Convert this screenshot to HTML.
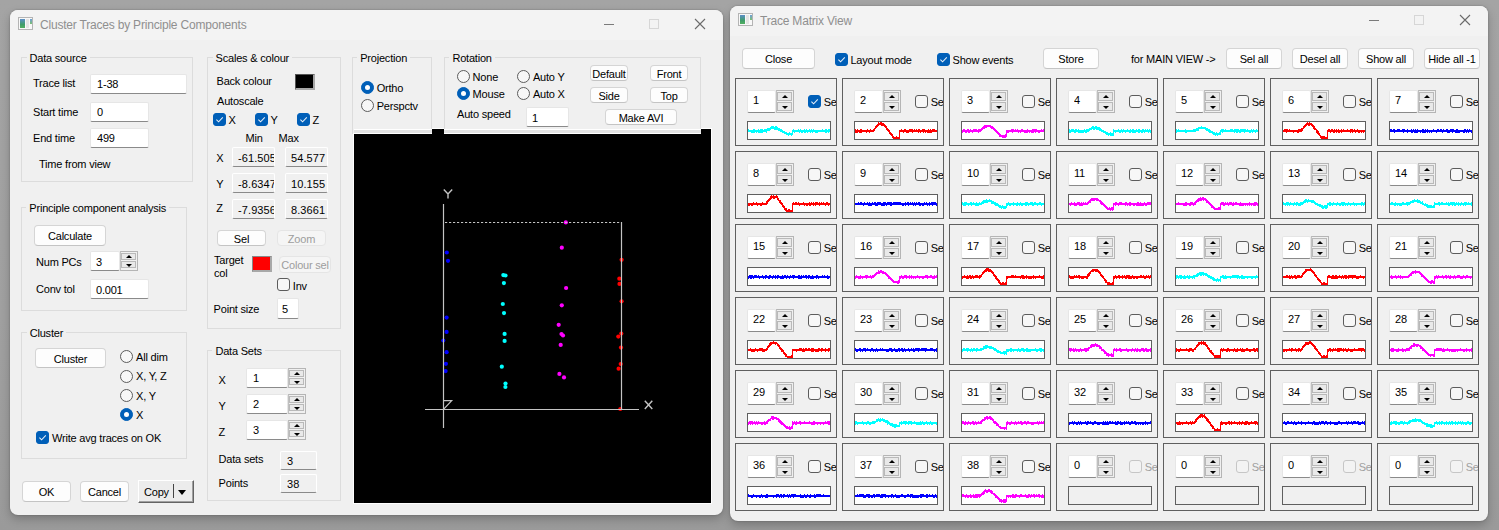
<!DOCTYPE html><html><head><meta charset="utf-8"><style>
*{box-sizing:border-box}
html,body{margin:0;padding:0;width:1499px;height:530px;overflow:hidden;background:#999;}
body{position:relative;font-family:'Liberation Sans', sans-serif;}
.desk{position:absolute;left:0;top:0;width:1499px;height:530px;background:linear-gradient(180deg,#a4a4a4 0%,#a0a0a0 60%,#9a9a9a 100%);}
.win{position:absolute;background:#f0f0f0;border-radius:8px;box-shadow:0 4px 10px rgba(0,0,0,0.22),0 0 2px rgba(0,0,0,0.28);overflow:hidden}
.tbar{position:absolute;left:0;top:0;right:0;height:30px;background:#f3f3f3}
.t{position:absolute;font-size:11px;line-height:13px;white-space:nowrap;color:#000;letter-spacing:-0.2px}
.ttl{position:absolute;font-size:12px;line-height:14px;white-space:nowrap;color:#8f8f8f;letter-spacing:-0.2px}
.grp{position:absolute;border:1px solid #dcdcdc}
.glab{background:#f0f0f0;padding:0 3px}
.btn{position:absolute;background:#fdfdfd;border:1px solid #d5d5d5;border-bottom-color:#c4c4c4;border-radius:4px;text-align:center;font-size:11px;color:#000;white-space:nowrap;overflow:hidden;letter-spacing:-0.2px}
.btn.dis{background:#f5f5f5;border-color:#e5e5e5;color:#9d9d9d}
.ed{position:absolute;background:#fff;border:1px solid #e6e6e6;border-bottom:1px solid #8a8a8a;border-radius:2px}
.ed.ro{background:#f0f0f0;border-color:#fff;border-bottom-color:#8a8a8a}
.spn{position:absolute;background:#f0f0f0;border:1px solid #b5b5b5;border-left-color:#c0c0c0}
.su{position:absolute;left:0px;right:1px;background:#e9e9e9;border:1px solid #b9b9b9}
.au{position:absolute;left:50%;top:50%;margin-left:-3px;margin-top:-2px;width:0;height:0;border-left:3px solid transparent;border-right:3px solid transparent;border-bottom:3px solid #000}
.ad{position:absolute;left:50%;top:50%;margin-left:-3px;margin-top:-1px;width:0;height:0;border-left:3px solid transparent;border-right:3px solid transparent;border-top:3px solid #000}
.cb{position:absolute;width:13px;height:13px;border:1px solid #5c5c5c;border-radius:3px;background:#f7f7f7}
.cb.on{background:#005fb8;border-color:#005fb8}
.cb.dis{border-color:#c6c6c6;background:#f3f3f3}
.rd{position:absolute;width:13px;height:13px;border:1px solid #5c5c5c;border-radius:50%;background:#f7f7f7}
.rd.on{background:#005fb8;border-color:#005fb8}
.rd.on i{position:absolute;left:3px;top:3px;width:5px;height:5px;border-radius:50%;background:#fff}
.cell{position:absolute;width:102px;height:68px;border:1px solid #5f5f5f}
.tr{position:absolute;width:84px;height:19px;border:1px solid #5f5f5f;background:#fff}
.tr.empty{background:#f0f0f0}
</style></head><body><div class="desk"></div>
<div class="win" style="left:10px;top:10px;width:713px;height:505px">
<div class="tbar"></div>
</div>
<div style="position:absolute;left:18px;top:17px;width:15px;height:13px;border:1px solid #b4b4b4;background:#f8f8f8"><div style="position:absolute;left:1px;top:1px;width:5px;height:9px;background:linear-gradient(180deg,#5b8ec8,#3f9c6a 60%,#52b060)"></div><div style="position:absolute;left:7px;top:1px;width:3px;height:9px;background:#e4e4e4"></div><div style="position:absolute;left:11px;top:1px;width:2px;height:5px;background:linear-gradient(180deg,#6f9fd8,#7cc070)"></div></div>
<div class="ttl" style="left:40px;top:18px">Cluster Traces by Principle Components</div>
<div style="position:absolute;left:604px;top:24px;width:10px;height:1px;background:#7a7a7a"></div>
<div style="position:absolute;left:649px;top:19px;width:10px;height:10px;border:1px solid #d6d6d6"></div>
<svg style="position:absolute;left:694px;top:18px" width="12" height="12"><path d="M1 1 L11 11 M11 1 L1 11" stroke="#6a6a6a" stroke-width="1.1"/></svg>
<div class="grp" style="left:21px;top:57px;width:172px;height:125px"></div>
<div class="t glab" style="left:26.5px;top:52px">Data source</div>
<div class="t " style="left:33px;top:77px;">Trace list</div>
<div class="ed" style="left:90px;top:74px;width:97px;height:20px"></div>
<div class="t" style="left:97px;top:78px;width:89px;overflow:hidden;">1-38</div>
<div class="t " style="left:33px;top:106px;">Start time</div>
<div class="ed" style="left:90px;top:102px;width:59px;height:20px"></div>
<div class="t" style="left:97px;top:106px;width:51px;overflow:hidden;">0</div>
<div class="t " style="left:33px;top:132px;">End time</div>
<div class="ed" style="left:90px;top:128px;width:59px;height:20px"></div>
<div class="t" style="left:97px;top:132px;width:51px;overflow:hidden;">499</div>
<div class="t " style="left:39px;top:158px;">Time from view</div>
<div class="grp" style="left:21px;top:207px;width:166px;height:104px"></div>
<div class="t glab" style="left:26.3px;top:202px">Principle component analysis</div>
<div class="btn" style="left:34px;top:225px;width:72px;height:21px;line-height:21px">Calculate</div>
<div class="t " style="left:36px;top:256px;">Num PCs</div>
<div class="ed" style="left:90px;top:251px;width:30px;height:20px"></div>
<div class="t" style="left:96px;top:256px;width:23px;overflow:hidden;">3</div>
<div class="spn" style="left:120px;top:251px;width:18px;height:20px"><div class="su" style="top:1px;height:7px"><i class="au"></i></div><div class="su" style="top:9px;height:7px"><i class="ad"></i></div></div>
<div class="t " style="left:36px;top:283px;">Conv tol</div>
<div class="ed" style="left:90px;top:279px;width:59px;height:20px"></div>
<div class="t" style="left:96px;top:284px;width:52px;overflow:hidden;">0.001</div>
<div class="grp" style="left:21px;top:332px;width:166px;height:127px"></div>
<div class="t glab" style="left:26.7px;top:327px">Cluster</div>
<div class="btn" style="left:35px;top:348px;width:71px;height:20px;line-height:20px">Cluster</div>
<div class="rd" style="left:119.7px;top:350.2px"></div>
<div class="t " style="left:136px;top:351px;">All dim</div>
<div class="rd" style="left:119.7px;top:369.7px"></div>
<div class="t " style="left:136px;top:370px;">X, Y, Z</div>
<div class="rd" style="left:119.7px;top:389.3px"></div>
<div class="t " style="left:136px;top:390px;">X, Y</div>
<div class="rd on" style="left:119.7px;top:408.3px"><i></i></div>
<div class="t " style="left:136px;top:409px;">X</div>
<div class="cb on" style="left:36px;top:431px"><svg width="13" height="13" style="position:absolute;left:0;top:0"><path d="M2.4 5.6 L4.6 7.8 L8.8 3.4" stroke="#e8f0f8" stroke-width="1.05" fill="none"/></svg></div>
<div class="t " style="left:52px;top:432px;">Write avg traces on OK</div>
<div class="btn" style="left:22px;top:481px;width:49px;height:21px;line-height:21px">OK</div>
<div class="btn" style="left:80px;top:481px;width:49px;height:21px;line-height:21px">Cancel</div>
<div style="position:absolute;left:138px;top:480px;width:56px;height:23px;background:#ececec;border-top:1px solid #fff;border-left:1px solid #fff;border-right:1px solid #646464;border-bottom:1px solid #646464;box-shadow:inset -1px -1px 0 #a0a0a0"></div>
<div class="t " style="left:144px;top:486px;">Copy</div>
<div style="position:absolute;left:173px;top:484px;width:1px;height:14px;background:#444"></div>
<div style="position:absolute;left:178px;top:490px;width:0;height:0;border-left:4.5px solid transparent;border-right:4.5px solid transparent;border-top:5px solid #000"></div>
<div class="grp" style="left:207px;top:57px;width:134px;height:272px"></div>
<div class="t glab" style="left:212.6px;top:52px">Scales &amp; colour</div>
<div class="t " style="left:216.5px;top:75px;">Back colour</div>
<div style="position:absolute;left:295px;top:74px;width:20px;height:16px;background:#000;border-right:2px solid #a8a8a8;border-bottom:2px solid #a8a8a8;border-top:1px solid #555;border-left:1px solid #555"></div>
<div class="t " style="left:217px;top:95px;">Autoscale</div>
<div class="cb on" style="left:213px;top:113px"><svg width="13" height="13" style="position:absolute;left:0;top:0"><path d="M2.4 5.6 L4.6 7.8 L8.8 3.4" stroke="#e8f0f8" stroke-width="1.05" fill="none"/></svg></div>
<div class="t " style="left:228.5px;top:114px;">X</div>
<div class="cb on" style="left:255px;top:113px"><svg width="13" height="13" style="position:absolute;left:0;top:0"><path d="M2.4 5.6 L4.6 7.8 L8.8 3.4" stroke="#e8f0f8" stroke-width="1.05" fill="none"/></svg></div>
<div class="t " style="left:270.5px;top:114px;">Y</div>
<div class="cb on" style="left:297px;top:113px"><svg width="13" height="13" style="position:absolute;left:0;top:0"><path d="M2.4 5.6 L4.6 7.8 L8.8 3.4" stroke="#e8f0f8" stroke-width="1.05" fill="none"/></svg></div>
<div class="t " style="left:312.5px;top:114px;">Z</div>
<div class="t " style="left:245.5px;top:132px;">Min</div>
<div class="t " style="left:278.5px;top:132px;">Max</div>
<div class="t " style="left:216.3px;top:152px;">X</div>
<div class="ed ro" style="left:232px;top:147px;width:43px;height:20px"></div>
<div class="t" style="left:238px;top:152px;width:36px;overflow:hidden;letter-spacing:0.1px;">-61.505</div>
<div class="ed ro" style="left:285px;top:147px;width:43px;height:20px"></div>
<div class="t" style="left:291px;top:152px;width:36px;overflow:hidden;letter-spacing:0.1px;">54.577</div>
<div class="t " style="left:216.3px;top:178px;">Y</div>
<div class="ed ro" style="left:232px;top:173px;width:43px;height:20px"></div>
<div class="t" style="left:238px;top:178px;width:36px;overflow:hidden;letter-spacing:0.1px;">-8.6347</div>
<div class="ed ro" style="left:285px;top:173px;width:43px;height:20px"></div>
<div class="t" style="left:291px;top:178px;width:36px;overflow:hidden;letter-spacing:0.1px;">10.155</div>
<div class="t " style="left:216.3px;top:202px;">Z</div>
<div class="ed ro" style="left:232px;top:199px;width:43px;height:20px"></div>
<div class="t" style="left:238px;top:204px;width:36px;overflow:hidden;letter-spacing:0.1px;">-7.9356</div>
<div class="ed ro" style="left:285px;top:199px;width:43px;height:20px"></div>
<div class="t" style="left:291px;top:204px;width:36px;overflow:hidden;letter-spacing:0.1px;">8.3661</div>
<div class="btn" style="left:217px;top:230px;width:49px;height:16px;line-height:16px">Sel</div>
<div class="btn dis" style="left:277px;top:230px;width:49px;height:16px;line-height:16px">Zoom</div>
<div class="t " style="left:214px;top:254px;">Target</div>
<div class="t " style="left:214px;top:267px;">col</div>
<div style="position:absolute;left:252px;top:256px;width:20px;height:16px;background:#ff0000;border-right:2px solid #a8a8a8;border-bottom:2px solid #a8a8a8;border-top:1px solid #888;border-left:1px solid #888"></div>
<div class="btn dis" style="left:279px;top:256px;width:52px;height:17px;line-height:17px">Colour sel</div>
<div class="cb" style="left:277px;top:278px"></div>
<div class="t " style="left:292.8px;top:280px;">Inv</div>
<div class="t " style="left:213.6px;top:303px;">Point size</div>
<div class="ed" style="left:277px;top:298px;width:22px;height:21px"></div>
<div class="t" style="left:282px;top:303px;width:16px;overflow:hidden;">5</div>
<div class="grp" style="left:207px;top:350px;width:134px;height:151px"></div>
<div class="t glab" style="left:212.4px;top:345px">Data Sets</div>
<div class="t " style="left:218.6px;top:374px;">X</div>
<div class="ed" style="left:246px;top:368px;width:42px;height:20px"></div>
<div class="t" style="left:253px;top:372px;width:34px;overflow:hidden;">1</div>
<div class="spn" style="left:288px;top:368px;width:18px;height:20px"><div class="su" style="top:1px;height:7px"><i class="au"></i></div><div class="su" style="top:9px;height:7px"><i class="ad"></i></div></div>
<div class="t " style="left:218.6px;top:400px;">Y</div>
<div class="ed" style="left:246px;top:394px;width:42px;height:20px"></div>
<div class="t" style="left:253px;top:398px;width:34px;overflow:hidden;">2</div>
<div class="spn" style="left:288px;top:394px;width:18px;height:20px"><div class="su" style="top:1px;height:7px"><i class="au"></i></div><div class="su" style="top:9px;height:7px"><i class="ad"></i></div></div>
<div class="t " style="left:218.6px;top:426px;">Z</div>
<div class="ed" style="left:246px;top:420px;width:42px;height:20px"></div>
<div class="t" style="left:253px;top:424px;width:34px;overflow:hidden;">3</div>
<div class="spn" style="left:288px;top:420px;width:18px;height:20px"><div class="su" style="top:1px;height:7px"><i class="au"></i></div><div class="su" style="top:9px;height:7px"><i class="ad"></i></div></div>
<div class="t " style="left:218.6px;top:453px;">Data sets</div>
<div class="ed ro" style="left:280px;top:451px;width:37px;height:19px"></div>
<div class="t" style="left:287px;top:455px;width:29px;overflow:hidden;letter-spacing:0.1px;">3</div>
<div class="t " style="left:218.6px;top:477px;">Points</div>
<div class="ed ro" style="left:280px;top:474px;width:37px;height:19px"></div>
<div class="t" style="left:287px;top:478px;width:29px;overflow:hidden;letter-spacing:0.1px;">38</div>
<div class="grp" style="left:352px;top:57px;width:80px;height:77px"></div>
<div class="t glab" style="left:357.2px;top:52px">Projection</div>
<div class="rd on" style="left:360.9px;top:81.0px"><i></i></div>
<div class="t " style="left:376.7px;top:82px;">Ortho</div>
<div class="rd" style="left:360.9px;top:99.2px"></div>
<div class="t " style="left:376.7px;top:100px;">Perspctv</div>
<div class="grp" style="left:444px;top:57px;width:257px;height:77px"></div>
<div class="t glab" style="left:449.4px;top:52px">Rotation</div>
<div class="rd" style="left:456.9px;top:70.1px"></div>
<div class="t " style="left:472.6px;top:71px;">None</div>
<div class="rd on" style="left:456.9px;top:87.1px"><i></i></div>
<div class="t " style="left:472.6px;top:88px;">Mouse</div>
<div class="rd" style="left:516.9px;top:70.1px"></div>
<div class="t " style="left:532.9px;top:71px;">Auto Y</div>
<div class="rd" style="left:516.9px;top:87.1px"></div>
<div class="t " style="left:532.9px;top:88px;">Auto X</div>
<div class="t " style="left:457px;top:108px;">Auto speed</div>
<div class="ed" style="left:526px;top:107px;width:43px;height:20px"></div>
<div class="t" style="left:532px;top:112px;width:36px;overflow:hidden;">1</div>
<div class="btn" style="left:590px;top:65px;width:38px;height:16px;line-height:16px">Default</div>
<div class="btn" style="left:650px;top:65px;width:38px;height:16px;line-height:16px">Front</div>
<div class="btn" style="left:590px;top:87px;width:38px;height:16px;line-height:16px">Side</div>
<div class="btn" style="left:650px;top:87px;width:38px;height:16px;line-height:16px">Top</div>
<div class="btn" style="left:605px;top:109px;width:72px;height:16px;line-height:16px">Make AVI</div>
<div style="position:absolute;left:353px;top:128px;width:359px;height:376px;background:#fff"></div>
<div style="position:absolute;left:354px;top:129px;width:357px;height:374px;background:#000"></div>
<div style="position:absolute;left:353px;top:128px;width:79px;height:6px;background:linear-gradient(180deg,#f0f0f0 0px,#f0f0f0 1px,#fff 1px,#fff 2px,#e3e3e3 2px,#e3e3e3 5px,#fff 5px,#fff 6px)"></div>
<div style="position:absolute;left:353px;top:128px;width:1px;height:5px;background:#f0f0f0"></div>
<div style="position:absolute;left:444px;top:128px;width:257px;height:6px;background:linear-gradient(180deg,#f0f0f0 0px,#f0f0f0 1px,#fff 1px,#fff 2px,#e3e3e3 2px,#e3e3e3 5px,#fff 5px,#fff 6px)"></div>
<div style="position:absolute;left:352px;top:57px;width:1px;height:76px;background:#dcdcdc"></div>
<div style="position:absolute;left:431px;top:57px;width:1px;height:72px;background:#dcdcdc"></div>
<div style="position:absolute;left:444px;top:57px;width:1px;height:72px;background:#dcdcdc"></div>
<div style="position:absolute;left:700px;top:57px;width:1px;height:72px;background:#dcdcdc"></div>
<svg style="position:absolute;left:0;top:0" width="1499" height="530"><circle cx="446.8" cy="252.5" r="2.1" fill="#0000ff"/><circle cx="448" cy="260.8" r="2.1" fill="#0000ff"/><circle cx="446.6" cy="317.6" r="2.1" fill="#0000ff"/><circle cx="446.6" cy="331.9" r="2.1" fill="#0000ff"/><circle cx="443.3" cy="340.5" r="2.1" fill="#0000ff"/><circle cx="446.6" cy="352.2" r="2.1" fill="#0000ff"/><circle cx="445.9" cy="363.8" r="2.1" fill="#0000ff"/><circle cx="445.6" cy="371.1" r="2.1" fill="#0000ff"/><circle cx="503.3" cy="275.1" r="2.1" fill="#00ffff"/><circle cx="505.5" cy="275.5" r="2.1" fill="#00ffff"/><circle cx="503.9" cy="283.1" r="2.1" fill="#00ffff"/><circle cx="502.8" cy="304" r="2.1" fill="#00ffff"/><circle cx="504" cy="313.1" r="2.1" fill="#00ffff"/><circle cx="504.6" cy="333.9" r="2.1" fill="#00ffff"/><circle cx="504.6" cy="340.9" r="2.1" fill="#00ffff"/><circle cx="501.8" cy="366.7" r="2.1" fill="#00ffff"/><circle cx="505.5" cy="383.5" r="2.1" fill="#00ffff"/><circle cx="505.4" cy="387" r="2.1" fill="#00ffff"/><circle cx="565.8" cy="222.4" r="2.1" fill="#ff00ff"/><circle cx="561.8" cy="247.7" r="2.1" fill="#ff00ff"/><circle cx="566.1" cy="288" r="2.1" fill="#ff00ff"/><circle cx="561.8" cy="305.3" r="2.1" fill="#ff00ff"/><circle cx="558.7" cy="324.8" r="2.1" fill="#ff00ff"/><circle cx="561.5" cy="334" r="2.1" fill="#ff00ff"/><circle cx="563" cy="335.5" r="2.1" fill="#ff00ff"/><circle cx="560.7" cy="344.9" r="2.1" fill="#ff00ff"/><circle cx="559.4" cy="373.9" r="2.1" fill="#ff00ff"/><circle cx="564" cy="377.4" r="2.1" fill="#ff00ff"/><circle cx="621.6" cy="259.8" r="2.1" fill="#ff0000"/><circle cx="619.3" cy="278.7" r="2.1" fill="#ff0000"/><circle cx="619.5" cy="283.9" r="2.1" fill="#ff0000"/><circle cx="621.6" cy="301.3" r="2.1" fill="#ff0000"/><circle cx="621.3" cy="333.6" r="2.1" fill="#ff0000"/><circle cx="618.3" cy="336.6" r="2.1" fill="#ff0000"/><circle cx="621" cy="347.6" r="2.1" fill="#ff0000"/><circle cx="620.7" cy="364" r="2.1" fill="#ff0000"/><circle cx="618.6" cy="368.7" r="2.1" fill="#ff0000"/><circle cx="620.3" cy="409" r="2.1" fill="#ff0000"/><line x1="443.5" y1="204" x2="443.5" y2="428" stroke="#c4c4c4" stroke-width="1.2"/><line x1="425" y1="409.5" x2="639" y2="409.5" stroke="#c4c4c4" stroke-width="1.2"/><line x1="621.5" y1="222" x2="621.5" y2="409" stroke="#c4c4c4" stroke-width="1.2"/><line x1="445" y1="222.5" x2="621" y2="222.5" stroke="#c4c4c4" stroke-width="1.2" stroke-dasharray="2.2,1.8"/><path d="M443.8 189.5 L448 194 L452.2 189.5 M448 194 L448 198.5" stroke="#c4c4c4" stroke-width="1.4" fill="none"/><path d="M644.8 400.8 L652.3 409 M652.3 400.8 L644.8 409" stroke="#c4c4c4" stroke-width="1.4" fill="none"/><path d="M443.5 400.6 L451.7 400.6 L443.5 409.4" stroke="#c4c4c4" stroke-width="1.2" fill="none"/></svg>
<div class="win" style="left:730px;top:6px;width:758px;height:515px">
<div class="tbar"></div>
</div>
<div style="position:absolute;left:738px;top:13px;width:15px;height:13px;border:1px solid #b4b4b4;background:#f8f8f8"><div style="position:absolute;left:1px;top:1px;width:5px;height:9px;background:linear-gradient(180deg,#5b8ec8,#3f9c6a 60%,#52b060)"></div><div style="position:absolute;left:7px;top:1px;width:3px;height:9px;background:#e4e4e4"></div><div style="position:absolute;left:11px;top:1px;width:2px;height:5px;background:linear-gradient(180deg,#6f9fd8,#7cc070)"></div></div>
<div class="ttl" style="left:760px;top:14px">Trace Matrix View</div>
<div style="position:absolute;left:1369px;top:20px;width:10px;height:1px;background:#7a7a7a"></div>
<div style="position:absolute;left:1414px;top:15px;width:10px;height:10px;border:1px solid #d6d6d6"></div>
<svg style="position:absolute;left:1459px;top:14px" width="12" height="12"><path d="M1 1 L11 11 M11 1 L1 11" stroke="#6a6a6a" stroke-width="1.1"/></svg>
<div class="btn" style="left:742px;top:48px;width:73px;height:21px;line-height:21px">Close</div>
<div class="cb on" style="left:835px;top:53px"><svg width="13" height="13" style="position:absolute;left:0;top:0"><path d="M2.4 5.6 L4.6 7.8 L8.8 3.4" stroke="#e8f0f8" stroke-width="1.05" fill="none"/></svg></div>
<div class="t " style="left:850.4px;top:54px;">Layout mode</div>
<div class="cb on" style="left:937px;top:53px"><svg width="13" height="13" style="position:absolute;left:0;top:0"><path d="M2.4 5.6 L4.6 7.8 L8.8 3.4" stroke="#e8f0f8" stroke-width="1.05" fill="none"/></svg></div>
<div class="t " style="left:952.5px;top:54px;">Show events</div>
<div class="btn" style="left:1043px;top:48px;width:56px;height:21px;line-height:21px">Store</div>
<div class="t " style="left:1131px;top:53px;">for MAIN VIEW -&gt;</div>
<div class="btn" style="left:1226px;top:48px;width:56px;height:21px;line-height:21px">Sel all</div>
<div class="btn" style="left:1292px;top:48px;width:56px;height:21px;line-height:21px">Desel all</div>
<div class="btn" style="left:1358px;top:48px;width:56px;height:21px;line-height:21px">Show all</div>
<div class="btn" style="left:1424px;top:48px;width:56px;height:21px;line-height:21px">Hide all -1</div>
<div class="cell" style="left:735px;top:78px"></div>
<div class="ed" style="left:747px;top:90px;width:29px;height:23px"></div>
<div class="t" style="left:753px;top:94px;width:22px;overflow:hidden;">1</div>
<div class="spn" style="left:776px;top:90px;width:18px;height:23px"><div class="su" style="top:1px;height:9px"><i class="au"></i></div><div class="su" style="top:11px;height:9px"><i class="ad"></i></div></div>
<div class="cb on" style="left:808px;top:95px"><svg width="13" height="13" style="position:absolute;left:0;top:0"><path d="M2.4 5.6 L4.6 7.8 L8.8 3.4" stroke="#e8f0f8" stroke-width="1.05" fill="none"/></svg></div>
<div class="t" style="left:823.7px;top:96px;width:12px;overflow:hidden">Sel</div>
<div class="tr" style="left:747px;top:121px"><svg width="82" height="17" style="position:absolute;left:0;top:0"><path d="M0 7h1v3h-1zM1 8h1v2h-1zM2 8h1v2h-1zM3 8h1v3h-1zM4 8h1v3h-1zM5 7h1v4h-1zM6 7h1v4h-1zM7 8h1v2h-1zM8 8h1v3h-1zM9 8h1v2h-1zM10 7h1v4h-1zM11 8h1v3h-1zM12 7h1v4h-1zM13 7h1v4h-1zM14 7h1v4h-1zM15 8h1v2h-1zM16 7h1v3h-1zM17 7h1v3h-1zM18 7h1v4h-1zM19 6h1v3h-1zM20 6h1v3h-1zM21 6h1v3h-1zM22 5h1v3h-1zM23 4h1v3h-1zM24 4h1v3h-1zM25 4h1v3h-1zM26 5h1v3h-1zM27 4h1v4h-1zM28 4h1v4h-1zM29 5h1v3h-1zM30 6h1v3h-1zM31 6h1v3h-1zM32 7h1v3h-1zM33 7h1v3h-1zM34 8h1v3h-1zM35 9h1v2h-1zM36 9h1v3h-1zM37 10h1v2h-1zM38 10h1v3h-1zM39 11h1v2h-1zM40 11h1v3h-1zM41 10h1v3h-1zM42 11h1v2h-1zM43 11h1v3h-1zM44 8h1v5h-1zM45 7h1v3h-1zM46 8h1v3h-1zM47 8h1v2h-1zM48 8h1v2h-1zM49 8h1v2h-1zM50 7h1v3h-1zM51 8h1v3h-1zM52 7h1v3h-1zM53 8h1v3h-1zM54 8h1v3h-1zM55 8h1v2h-1zM56 7h1v4h-1zM57 8h1v3h-1zM58 7h1v3h-1zM59 8h1v3h-1zM60 8h1v2h-1zM61 7h1v3h-1zM62 8h1v3h-1zM63 7h1v3h-1zM64 8h1v3h-1zM65 7h1v3h-1zM66 8h1v2h-1zM67 8h1v3h-1zM68 8h1v3h-1zM69 8h1v3h-1zM70 8h1v2h-1zM71 8h1v2h-1zM72 8h1v2h-1zM73 8h1v2h-1zM74 7h1v3h-1zM75 8h1v2h-1zM76 8h1v2h-1zM77 7h1v4h-1zM78 7h1v4h-1zM79 8h1v2h-1zM80 7h1v4h-1zM81 7h1v3h-1z" fill="#00ffff" shape-rendering="crispEdges"/></svg></div>
<div class="cell" style="left:842px;top:78px"></div>
<div class="ed" style="left:854px;top:90px;width:29px;height:23px"></div>
<div class="t" style="left:860px;top:94px;width:22px;overflow:hidden;">2</div>
<div class="spn" style="left:883px;top:90px;width:18px;height:23px"><div class="su" style="top:1px;height:9px"><i class="au"></i></div><div class="su" style="top:11px;height:9px"><i class="ad"></i></div></div>
<div class="cb" style="left:915px;top:95px"></div>
<div class="t" style="left:930.7px;top:96px;width:12px;overflow:hidden">Sel</div>
<div class="tr" style="left:854px;top:121px"><svg width="82" height="17" style="position:absolute;left:0;top:0"><path d="M0 7h1v4h-1zM1 8h1v3h-1zM2 7h1v4h-1zM3 8h1v2h-1zM4 8h1v3h-1zM5 7h1v4h-1zM6 7h1v4h-1zM7 8h1v2h-1zM8 8h1v2h-1zM9 8h1v2h-1zM10 8h1v2h-1zM11 8h1v3h-1zM12 7h1v3h-1zM13 8h1v2h-1zM14 8h1v3h-1zM15 7h1v3h-1zM16 8h1v2h-1zM17 8h1v2h-1zM18 7h1v3h-1zM19 6h1v3h-1zM20 4h1v3h-1zM21 3h1v3h-1zM22 2h1v3h-1zM23 0h1v4h-1zM24 1h1v2h-1zM25 0h1v3h-1zM26 0h1v4h-1zM27 1h1v3h-1zM28 1h1v3h-1zM29 2h1v3h-1zM30 3h1v3h-1zM31 4h1v4h-1zM32 6h1v3h-1zM33 7h1v3h-1zM34 8h1v4h-1zM35 10h1v3h-1zM36 11h1v3h-1zM37 12h1v4h-1zM38 14h1v3h-1zM39 15h1v2h-1zM40 15h1v2h-1zM41 14h1v3h-1zM42 15h1v2h-1zM43 15h1v2h-1zM44 8h1v9h-1zM45 8h1v2h-1zM46 7h1v3h-1zM47 8h1v2h-1zM48 8h1v3h-1zM49 7h1v3h-1zM50 7h1v3h-1zM51 8h1v3h-1zM52 8h1v3h-1zM53 8h1v3h-1zM54 7h1v3h-1zM55 7h1v3h-1zM56 7h1v3h-1zM57 7h1v4h-1zM58 8h1v2h-1zM59 7h1v3h-1zM60 8h1v2h-1zM61 7h1v3h-1zM62 8h1v2h-1zM63 7h1v4h-1zM64 7h1v3h-1zM65 8h1v3h-1zM66 8h1v2h-1zM67 7h1v3h-1zM68 7h1v4h-1zM69 7h1v3h-1zM70 8h1v3h-1zM71 8h1v2h-1zM72 8h1v3h-1zM73 7h1v4h-1zM74 8h1v3h-1zM75 7h1v4h-1zM76 8h1v3h-1zM77 7h1v3h-1zM78 7h1v3h-1zM79 7h1v3h-1zM80 8h1v2h-1zM81 8h1v2h-1z" fill="#ff0000" shape-rendering="crispEdges"/></svg></div>
<div class="cell" style="left:949px;top:78px"></div>
<div class="ed" style="left:961px;top:90px;width:29px;height:23px"></div>
<div class="t" style="left:967px;top:94px;width:22px;overflow:hidden;">3</div>
<div class="spn" style="left:990px;top:90px;width:18px;height:23px"><div class="su" style="top:1px;height:9px"><i class="au"></i></div><div class="su" style="top:11px;height:9px"><i class="ad"></i></div></div>
<div class="cb" style="left:1022px;top:95px"></div>
<div class="t" style="left:1037.7px;top:96px;width:12px;overflow:hidden">Sel</div>
<div class="tr" style="left:961px;top:121px"><svg width="82" height="17" style="position:absolute;left:0;top:0"><path d="M0 8h1v3h-1zM1 7h1v3h-1zM2 7h1v3h-1zM3 8h1v3h-1zM4 8h1v3h-1zM5 7h1v3h-1zM6 7h1v4h-1zM7 8h1v3h-1zM8 7h1v3h-1zM9 8h1v2h-1zM10 8h1v3h-1zM11 7h1v3h-1zM12 7h1v3h-1zM13 7h1v3h-1zM14 7h1v3h-1zM15 8h1v2h-1zM16 7h1v4h-1zM17 7h1v3h-1zM18 7h1v3h-1zM19 6h1v3h-1zM20 5h1v3h-1zM21 4h1v3h-1zM22 3h1v4h-1zM23 3h1v3h-1zM24 3h1v3h-1zM25 3h1v2h-1zM26 3h1v2h-1zM27 3h1v2h-1zM28 3h1v3h-1zM29 4h1v3h-1zM30 4h1v3h-1zM31 5h1v3h-1zM32 6h1v3h-1zM33 7h1v3h-1zM34 8h1v3h-1zM35 9h1v3h-1zM36 10h1v3h-1zM37 11h1v4h-1zM38 12h1v3h-1zM39 13h1v2h-1zM40 13h1v3h-1zM41 13h1v3h-1zM42 13h1v3h-1zM43 12h1v4h-1zM44 8h1v7h-1zM45 8h1v3h-1zM46 8h1v3h-1zM47 8h1v2h-1zM48 8h1v2h-1zM49 7h1v3h-1zM50 7h1v4h-1zM51 7h1v3h-1zM52 8h1v2h-1zM53 7h1v3h-1zM54 8h1v2h-1zM55 7h1v3h-1zM56 8h1v3h-1zM57 8h1v2h-1zM58 8h1v3h-1zM59 7h1v3h-1zM60 7h1v3h-1zM61 8h1v2h-1zM62 8h1v3h-1zM63 8h1v3h-1zM64 8h1v3h-1zM65 7h1v4h-1zM66 8h1v2h-1zM67 8h1v3h-1zM68 8h1v2h-1zM69 8h1v3h-1zM70 7h1v4h-1zM71 7h1v4h-1zM72 7h1v3h-1zM73 7h1v4h-1zM74 7h1v3h-1zM75 8h1v2h-1zM76 8h1v3h-1zM77 8h1v3h-1zM78 8h1v2h-1zM79 7h1v3h-1zM80 8h1v2h-1zM81 7h1v3h-1z" fill="#ff00ff" shape-rendering="crispEdges"/></svg></div>
<div class="cell" style="left:1056px;top:78px"></div>
<div class="ed" style="left:1068px;top:90px;width:29px;height:23px"></div>
<div class="t" style="left:1074px;top:94px;width:22px;overflow:hidden;">4</div>
<div class="spn" style="left:1097px;top:90px;width:18px;height:23px"><div class="su" style="top:1px;height:9px"><i class="au"></i></div><div class="su" style="top:11px;height:9px"><i class="ad"></i></div></div>
<div class="cb" style="left:1129px;top:95px"></div>
<div class="t" style="left:1144.7px;top:96px;width:12px;overflow:hidden">Sel</div>
<div class="tr" style="left:1068px;top:121px"><svg width="82" height="17" style="position:absolute;left:0;top:0"><path d="M0 7h1v4h-1zM1 8h1v3h-1zM2 7h1v3h-1zM3 7h1v3h-1zM4 7h1v3h-1zM5 8h1v3h-1zM6 7h1v4h-1zM7 7h1v3h-1zM8 8h1v2h-1zM9 7h1v4h-1zM10 8h1v3h-1zM11 8h1v3h-1zM12 8h1v3h-1zM13 8h1v3h-1zM14 8h1v3h-1zM15 7h1v3h-1zM16 8h1v3h-1zM17 7h1v4h-1zM18 7h1v3h-1zM19 7h1v3h-1zM20 6h1v3h-1zM21 6h1v2h-1zM22 5h1v3h-1zM23 4h1v3h-1zM24 4h1v4h-1zM25 5h1v3h-1zM26 4h1v3h-1zM27 4h1v4h-1zM28 5h1v3h-1zM29 5h1v3h-1zM30 5h1v4h-1zM31 6h1v3h-1zM32 7h1v3h-1zM33 8h1v2h-1zM34 8h1v3h-1zM35 9h1v2h-1zM36 9h1v3h-1zM37 10h1v3h-1zM38 10h1v3h-1zM39 11h1v3h-1zM40 11h1v2h-1zM41 10h1v4h-1zM42 11h1v3h-1zM43 11h1v3h-1zM44 7h1v7h-1zM45 8h1v2h-1zM46 8h1v3h-1zM47 8h1v2h-1zM48 8h1v2h-1zM49 7h1v3h-1zM50 8h1v3h-1zM51 8h1v3h-1zM52 7h1v3h-1zM53 8h1v3h-1zM54 7h1v3h-1zM55 8h1v2h-1zM56 8h1v3h-1zM57 8h1v2h-1zM58 7h1v3h-1zM59 8h1v2h-1zM60 8h1v3h-1zM61 7h1v4h-1zM62 8h1v2h-1zM63 7h1v4h-1zM64 7h1v4h-1zM65 8h1v3h-1zM66 8h1v3h-1zM67 7h1v3h-1zM68 8h1v2h-1zM69 7h1v4h-1zM70 7h1v4h-1zM71 8h1v2h-1zM72 8h1v3h-1zM73 7h1v4h-1zM74 7h1v3h-1zM75 8h1v3h-1zM76 7h1v3h-1zM77 8h1v2h-1zM78 7h1v3h-1zM79 8h1v3h-1zM80 7h1v3h-1zM81 8h1v3h-1z" fill="#00ffff" shape-rendering="crispEdges"/></svg></div>
<div class="cell" style="left:1163px;top:78px"></div>
<div class="ed" style="left:1175px;top:90px;width:29px;height:23px"></div>
<div class="t" style="left:1181px;top:94px;width:22px;overflow:hidden;">5</div>
<div class="spn" style="left:1204px;top:90px;width:18px;height:23px"><div class="su" style="top:1px;height:9px"><i class="au"></i></div><div class="su" style="top:11px;height:9px"><i class="ad"></i></div></div>
<div class="cb" style="left:1236px;top:95px"></div>
<div class="t" style="left:1251.7px;top:96px;width:12px;overflow:hidden">Sel</div>
<div class="tr" style="left:1175px;top:121px"><svg width="82" height="17" style="position:absolute;left:0;top:0"><path d="M0 7h1v4h-1zM1 8h1v2h-1zM2 7h1v3h-1zM3 8h1v2h-1zM4 8h1v2h-1zM5 8h1v2h-1zM6 8h1v2h-1zM7 8h1v2h-1zM8 8h1v2h-1zM9 7h1v4h-1zM10 8h1v3h-1zM11 8h1v2h-1zM12 8h1v2h-1zM13 8h1v2h-1zM14 8h1v2h-1zM15 8h1v2h-1zM16 8h1v2h-1zM17 7h1v3h-1zM18 7h1v3h-1zM19 7h1v3h-1zM20 6h1v3h-1zM21 6h1v3h-1zM22 5h1v4h-1zM23 5h1v2h-1zM24 5h1v2h-1zM25 4h1v3h-1zM26 5h1v2h-1zM27 5h1v2h-1zM28 5h1v2h-1zM29 5h1v3h-1zM30 6h1v3h-1zM31 6h1v3h-1zM32 7h1v3h-1zM33 7h1v4h-1zM34 8h1v3h-1zM35 9h1v2h-1zM36 9h1v3h-1zM37 10h1v3h-1zM38 10h1v3h-1zM39 11h1v3h-1zM40 10h1v3h-1zM41 11h1v3h-1zM42 11h1v2h-1zM43 10h1v3h-1zM44 8h1v5h-1zM45 7h1v3h-1zM46 7h1v4h-1zM47 7h1v3h-1zM48 8h1v2h-1zM49 7h1v3h-1zM50 8h1v2h-1zM51 8h1v2h-1zM52 8h1v2h-1zM53 8h1v2h-1zM54 7h1v3h-1zM55 7h1v3h-1zM56 7h1v3h-1zM57 8h1v2h-1zM58 7h1v4h-1zM59 7h1v3h-1zM60 7h1v4h-1zM61 7h1v4h-1zM62 7h1v3h-1zM63 8h1v3h-1zM64 7h1v4h-1zM65 7h1v3h-1zM66 7h1v3h-1zM67 7h1v3h-1zM68 7h1v4h-1zM69 7h1v3h-1zM70 8h1v2h-1zM71 7h1v3h-1zM72 8h1v2h-1zM73 8h1v3h-1zM74 8h1v3h-1zM75 7h1v3h-1zM76 8h1v3h-1zM77 7h1v3h-1zM78 8h1v2h-1zM79 8h1v3h-1zM80 7h1v3h-1zM81 8h1v2h-1z" fill="#00ffff" shape-rendering="crispEdges"/></svg></div>
<div class="cell" style="left:1270px;top:78px"></div>
<div class="ed" style="left:1282px;top:90px;width:29px;height:23px"></div>
<div class="t" style="left:1288px;top:94px;width:22px;overflow:hidden;">6</div>
<div class="spn" style="left:1311px;top:90px;width:18px;height:23px"><div class="su" style="top:1px;height:9px"><i class="au"></i></div><div class="su" style="top:11px;height:9px"><i class="ad"></i></div></div>
<div class="cb" style="left:1343px;top:95px"></div>
<div class="t" style="left:1358.7px;top:96px;width:12px;overflow:hidden">Sel</div>
<div class="tr" style="left:1282px;top:121px"><svg width="82" height="17" style="position:absolute;left:0;top:0"><path d="M0 8h1v2h-1zM1 7h1v3h-1zM2 7h1v3h-1zM3 7h1v4h-1zM4 7h1v3h-1zM5 8h1v2h-1zM6 7h1v3h-1zM7 8h1v2h-1zM8 8h1v2h-1zM9 8h1v2h-1zM10 8h1v3h-1zM11 8h1v2h-1zM12 8h1v2h-1zM13 8h1v2h-1zM14 8h1v3h-1zM15 7h1v4h-1zM16 7h1v3h-1zM17 7h1v3h-1zM18 6h1v4h-1zM19 6h1v3h-1zM20 4h1v3h-1zM21 3h1v3h-1zM22 2h1v3h-1zM23 1h1v3h-1zM24 0h1v3h-1zM25 1h1v3h-1zM26 0h1v4h-1zM27 1h1v2h-1zM28 1h1v3h-1zM29 2h1v3h-1zM30 3h1v4h-1zM31 4h1v4h-1zM32 6h1v2h-1zM33 7h1v4h-1zM34 8h1v4h-1zM35 9h1v4h-1zM36 11h1v3h-1zM37 13h1v3h-1zM38 14h1v3h-1zM39 14h1v3h-1zM40 14h1v3h-1zM41 14h1v3h-1zM42 15h1v2h-1zM43 15h1v2h-1zM44 8h1v9h-1zM45 7h1v3h-1zM46 7h1v3h-1zM47 8h1v3h-1zM48 7h1v3h-1zM49 7h1v3h-1zM50 8h1v3h-1zM51 7h1v4h-1zM52 8h1v2h-1zM53 7h1v4h-1zM54 8h1v2h-1zM55 7h1v4h-1zM56 8h1v3h-1zM57 8h1v2h-1zM58 7h1v4h-1zM59 8h1v2h-1zM60 7h1v3h-1zM61 8h1v2h-1zM62 8h1v2h-1zM63 8h1v2h-1zM64 7h1v3h-1zM65 8h1v2h-1zM66 8h1v2h-1zM67 7h1v4h-1zM68 7h1v3h-1zM69 7h1v4h-1zM70 8h1v2h-1zM71 7h1v3h-1zM72 8h1v3h-1zM73 8h1v2h-1zM74 7h1v3h-1zM75 8h1v3h-1zM76 8h1v3h-1zM77 8h1v2h-1zM78 8h1v3h-1zM79 8h1v2h-1zM80 8h1v3h-1zM81 8h1v2h-1z" fill="#ff0000" shape-rendering="crispEdges"/></svg></div>
<div class="cell" style="left:1377px;top:78px"></div>
<div class="ed" style="left:1389px;top:90px;width:29px;height:23px"></div>
<div class="t" style="left:1395px;top:94px;width:22px;overflow:hidden;">7</div>
<div class="spn" style="left:1418px;top:90px;width:18px;height:23px"><div class="su" style="top:1px;height:9px"><i class="au"></i></div><div class="su" style="top:11px;height:9px"><i class="ad"></i></div></div>
<div class="cb" style="left:1450px;top:95px"></div>
<div class="t" style="left:1465.7px;top:96px;width:12px;overflow:hidden">Sel</div>
<div class="tr" style="left:1389px;top:121px"><svg width="82" height="17" style="position:absolute;left:0;top:0"><path d="M0 7h1v3h-1zM1 7h1v3h-1zM2 8h1v2h-1zM3 7h1v3h-1zM4 7h1v4h-1zM5 8h1v2h-1zM6 8h1v2h-1zM7 7h1v3h-1zM8 7h1v3h-1zM9 7h1v3h-1zM10 8h1v2h-1zM11 8h1v2h-1zM12 7h1v3h-1zM13 7h1v4h-1zM14 7h1v3h-1zM15 8h1v2h-1zM16 8h1v2h-1zM17 7h1v4h-1zM18 8h1v2h-1zM19 8h1v2h-1zM20 8h1v2h-1zM21 7h1v4h-1zM22 8h1v3h-1zM23 7h1v3h-1zM24 8h1v3h-1zM25 7h1v4h-1zM26 8h1v3h-1zM27 7h1v4h-1zM28 8h1v2h-1zM29 8h1v2h-1zM30 8h1v3h-1zM31 8h1v2h-1zM32 7h1v4h-1zM33 7h1v4h-1zM34 8h1v3h-1zM35 7h1v4h-1zM36 8h1v2h-1zM37 7h1v4h-1zM38 8h1v2h-1zM39 8h1v3h-1zM40 8h1v2h-1zM41 8h1v3h-1zM42 8h1v2h-1zM43 7h1v3h-1zM44 8h1v2h-1zM45 8h1v2h-1zM46 8h1v3h-1zM47 7h1v3h-1zM48 7h1v3h-1zM49 8h1v2h-1zM50 7h1v3h-1zM51 7h1v3h-1zM52 8h1v3h-1zM53 7h1v3h-1zM54 8h1v2h-1zM55 8h1v2h-1zM56 7h1v3h-1zM57 7h1v4h-1zM58 8h1v3h-1zM59 8h1v3h-1zM60 7h1v3h-1zM61 7h1v3h-1zM62 7h1v4h-1zM63 7h1v3h-1zM64 8h1v2h-1zM65 8h1v3h-1zM66 7h1v4h-1zM67 7h1v4h-1zM68 8h1v3h-1zM69 8h1v3h-1zM70 8h1v2h-1zM71 8h1v2h-1zM72 8h1v2h-1zM73 8h1v3h-1zM74 7h1v4h-1zM75 7h1v3h-1zM76 8h1v3h-1zM77 7h1v3h-1zM78 8h1v3h-1zM79 7h1v3h-1zM80 8h1v2h-1zM81 8h1v3h-1z" fill="#0000ff" shape-rendering="crispEdges"/></svg></div>
<div class="cell" style="left:735px;top:151px"></div>
<div class="ed" style="left:747px;top:163px;width:29px;height:23px"></div>
<div class="t" style="left:753px;top:167px;width:22px;overflow:hidden;">8</div>
<div class="spn" style="left:776px;top:163px;width:18px;height:23px"><div class="su" style="top:1px;height:9px"><i class="au"></i></div><div class="su" style="top:11px;height:9px"><i class="ad"></i></div></div>
<div class="cb" style="left:808px;top:168px"></div>
<div class="t" style="left:823.7px;top:169px;width:12px;overflow:hidden">Sel</div>
<div class="tr" style="left:747px;top:194px"><svg width="82" height="17" style="position:absolute;left:0;top:0"><path d="M0 8h1v3h-1zM1 8h1v3h-1zM2 8h1v2h-1zM3 8h1v3h-1zM4 8h1v3h-1zM5 7h1v3h-1zM6 8h1v2h-1zM7 8h1v2h-1zM8 7h1v3h-1zM9 8h1v3h-1zM10 8h1v2h-1zM11 8h1v2h-1zM12 8h1v3h-1zM13 8h1v3h-1zM14 7h1v3h-1zM15 8h1v2h-1zM16 8h1v2h-1zM17 8h1v2h-1zM18 6h1v4h-1zM19 5h1v4h-1zM20 4h1v3h-1zM21 3h1v3h-1zM22 1h1v4h-1zM23 0h1v4h-1zM24 1h1v2h-1zM25 0h1v4h-1zM26 1h1v3h-1zM27 1h1v2h-1zM28 0h1v3h-1zM29 1h1v4h-1zM30 3h1v3h-1zM31 5h1v3h-1zM32 5h1v4h-1zM33 7h1v3h-1zM34 8h1v4h-1zM35 10h1v3h-1zM36 11h1v4h-1zM37 13h1v3h-1zM38 13h1v4h-1zM39 15h1v2h-1zM40 14h1v3h-1zM41 14h1v3h-1zM42 15h1v2h-1zM43 15h1v2h-1zM44 8h1v9h-1zM45 7h1v3h-1zM46 8h1v2h-1zM47 7h1v3h-1zM48 7h1v3h-1zM49 8h1v2h-1zM50 7h1v3h-1zM51 8h1v3h-1zM52 8h1v2h-1zM53 8h1v2h-1zM54 8h1v2h-1zM55 7h1v3h-1zM56 8h1v3h-1zM57 8h1v2h-1zM58 8h1v3h-1zM59 8h1v3h-1zM60 8h1v2h-1zM61 7h1v4h-1zM62 8h1v3h-1zM63 7h1v3h-1zM64 8h1v2h-1zM65 7h1v4h-1zM66 8h1v2h-1zM67 7h1v4h-1zM68 7h1v3h-1zM69 7h1v3h-1zM70 8h1v2h-1zM71 7h1v4h-1zM72 8h1v2h-1zM73 7h1v3h-1zM74 8h1v2h-1zM75 7h1v3h-1zM76 8h1v2h-1zM77 8h1v3h-1zM78 7h1v3h-1zM79 7h1v3h-1zM80 8h1v3h-1zM81 8h1v2h-1z" fill="#ff0000" shape-rendering="crispEdges"/></svg></div>
<div class="cell" style="left:842px;top:151px"></div>
<div class="ed" style="left:854px;top:163px;width:29px;height:23px"></div>
<div class="t" style="left:860px;top:167px;width:22px;overflow:hidden;">9</div>
<div class="spn" style="left:883px;top:163px;width:18px;height:23px"><div class="su" style="top:1px;height:9px"><i class="au"></i></div><div class="su" style="top:11px;height:9px"><i class="ad"></i></div></div>
<div class="cb" style="left:915px;top:168px"></div>
<div class="t" style="left:930.7px;top:169px;width:12px;overflow:hidden">Sel</div>
<div class="tr" style="left:854px;top:194px"><svg width="82" height="17" style="position:absolute;left:0;top:0"><path d="M0 8h1v2h-1zM1 8h1v2h-1zM2 8h1v2h-1zM3 7h1v3h-1zM4 8h1v2h-1zM5 7h1v3h-1zM6 7h1v3h-1zM7 8h1v2h-1zM8 8h1v3h-1zM9 7h1v3h-1zM10 8h1v2h-1zM11 8h1v2h-1zM12 7h1v3h-1zM13 8h1v3h-1zM14 7h1v4h-1zM15 8h1v3h-1zM16 8h1v3h-1zM17 7h1v3h-1zM18 8h1v2h-1zM19 7h1v3h-1zM20 7h1v4h-1zM21 8h1v3h-1zM22 7h1v4h-1zM23 7h1v3h-1zM24 7h1v3h-1zM25 7h1v3h-1zM26 8h1v3h-1zM27 8h1v3h-1zM28 7h1v4h-1zM29 7h1v4h-1zM30 7h1v3h-1zM31 8h1v3h-1zM32 7h1v3h-1zM33 7h1v3h-1zM34 7h1v3h-1zM35 7h1v4h-1zM36 7h1v4h-1zM37 8h1v2h-1zM38 7h1v3h-1zM39 7h1v3h-1zM40 7h1v3h-1zM41 7h1v3h-1zM42 7h1v3h-1zM43 7h1v3h-1zM44 7h1v3h-1zM45 7h1v3h-1zM46 8h1v2h-1zM47 8h1v3h-1zM48 8h1v3h-1zM49 8h1v2h-1zM50 7h1v4h-1zM51 8h1v2h-1zM52 7h1v3h-1zM53 7h1v4h-1zM54 8h1v2h-1zM55 7h1v3h-1zM56 8h1v2h-1zM57 7h1v3h-1zM58 8h1v3h-1zM59 7h1v3h-1zM60 8h1v3h-1zM61 7h1v3h-1zM62 8h1v2h-1zM63 7h1v3h-1zM64 7h1v4h-1zM65 8h1v3h-1zM66 8h1v2h-1zM67 8h1v3h-1zM68 8h1v3h-1zM69 7h1v3h-1zM70 8h1v2h-1zM71 7h1v3h-1zM72 8h1v3h-1zM73 8h1v2h-1zM74 7h1v4h-1zM75 8h1v2h-1zM76 7h1v3h-1zM77 7h1v4h-1zM78 7h1v3h-1zM79 7h1v3h-1zM80 7h1v3h-1zM81 8h1v3h-1z" fill="#0000ff" shape-rendering="crispEdges"/></svg></div>
<div class="cell" style="left:949px;top:151px"></div>
<div class="ed" style="left:961px;top:163px;width:29px;height:23px"></div>
<div class="t" style="left:967px;top:167px;width:22px;overflow:hidden;">10</div>
<div class="spn" style="left:990px;top:163px;width:18px;height:23px"><div class="su" style="top:1px;height:9px"><i class="au"></i></div><div class="su" style="top:11px;height:9px"><i class="ad"></i></div></div>
<div class="cb" style="left:1022px;top:168px"></div>
<div class="t" style="left:1037.7px;top:169px;width:12px;overflow:hidden">Sel</div>
<div class="tr" style="left:961px;top:194px"><svg width="82" height="17" style="position:absolute;left:0;top:0"><path d="M0 7h1v3h-1zM1 8h1v3h-1zM2 7h1v4h-1zM3 7h1v4h-1zM4 7h1v3h-1zM5 8h1v2h-1zM6 8h1v3h-1zM7 8h1v2h-1zM8 7h1v3h-1zM9 7h1v4h-1zM10 8h1v2h-1zM11 7h1v3h-1zM12 8h1v2h-1zM13 8h1v3h-1zM14 7h1v4h-1zM15 8h1v3h-1zM16 8h1v3h-1zM17 7h1v3h-1zM18 8h1v2h-1zM19 7h1v3h-1zM20 6h1v3h-1zM21 5h1v4h-1zM22 5h1v3h-1zM23 5h1v3h-1zM24 4h1v4h-1zM25 5h1v3h-1zM26 5h1v2h-1zM27 4h1v3h-1zM28 5h1v2h-1zM29 5h1v4h-1zM30 6h1v3h-1zM31 6h1v3h-1zM32 7h1v3h-1zM33 7h1v4h-1zM34 8h1v3h-1zM35 8h1v3h-1zM36 9h1v3h-1zM37 10h1v3h-1zM38 10h1v3h-1zM39 11h1v3h-1zM40 10h1v3h-1zM41 11h1v3h-1zM42 11h1v3h-1zM43 11h1v3h-1zM44 8h1v5h-1zM45 8h1v3h-1zM46 7h1v3h-1zM47 8h1v3h-1zM48 8h1v3h-1zM49 8h1v2h-1zM50 8h1v2h-1zM51 7h1v4h-1zM52 8h1v2h-1zM53 8h1v2h-1zM54 8h1v3h-1zM55 7h1v4h-1zM56 8h1v2h-1zM57 8h1v3h-1zM58 7h1v3h-1zM59 8h1v3h-1zM60 8h1v3h-1zM61 8h1v2h-1zM62 8h1v2h-1zM63 7h1v4h-1zM64 7h1v4h-1zM65 7h1v3h-1zM66 8h1v3h-1zM67 8h1v2h-1zM68 7h1v3h-1zM69 7h1v3h-1zM70 7h1v4h-1zM71 8h1v3h-1zM72 7h1v3h-1zM73 7h1v3h-1zM74 8h1v2h-1zM75 8h1v3h-1zM76 8h1v2h-1zM77 7h1v3h-1zM78 7h1v3h-1zM79 8h1v3h-1zM80 8h1v2h-1zM81 8h1v2h-1z" fill="#00ffff" shape-rendering="crispEdges"/></svg></div>
<div class="cell" style="left:1056px;top:151px"></div>
<div class="ed" style="left:1068px;top:163px;width:29px;height:23px"></div>
<div class="t" style="left:1074px;top:167px;width:22px;overflow:hidden;">11</div>
<div class="spn" style="left:1097px;top:163px;width:18px;height:23px"><div class="su" style="top:1px;height:9px"><i class="au"></i></div><div class="su" style="top:11px;height:9px"><i class="ad"></i></div></div>
<div class="cb" style="left:1129px;top:168px"></div>
<div class="t" style="left:1144.7px;top:169px;width:12px;overflow:hidden">Sel</div>
<div class="tr" style="left:1068px;top:194px"><svg width="82" height="17" style="position:absolute;left:0;top:0"><path d="M0 8h1v2h-1zM1 8h1v3h-1zM2 7h1v3h-1zM3 8h1v2h-1zM4 8h1v2h-1zM5 7h1v4h-1zM6 8h1v3h-1zM7 8h1v3h-1zM8 7h1v3h-1zM9 7h1v3h-1zM10 7h1v4h-1zM11 8h1v3h-1zM12 7h1v4h-1zM13 8h1v3h-1zM14 7h1v3h-1zM15 8h1v2h-1zM16 7h1v3h-1zM17 8h1v2h-1zM18 7h1v3h-1zM19 6h1v3h-1zM20 5h1v3h-1zM21 4h1v4h-1zM22 3h1v3h-1zM23 3h1v3h-1zM24 3h1v3h-1zM25 3h1v3h-1zM26 3h1v2h-1zM27 3h1v3h-1zM28 3h1v3h-1zM29 4h1v2h-1zM30 5h1v2h-1zM31 5h1v4h-1zM32 6h1v4h-1zM33 7h1v3h-1zM34 8h1v3h-1zM35 9h1v3h-1zM36 10h1v3h-1zM37 11h1v3h-1zM38 12h1v3h-1zM39 13h1v2h-1zM40 12h1v3h-1zM41 13h1v3h-1zM42 12h1v3h-1zM43 12h1v4h-1zM44 8h1v7h-1zM45 8h1v2h-1zM46 7h1v4h-1zM47 7h1v3h-1zM48 8h1v2h-1zM49 8h1v3h-1zM50 7h1v3h-1zM51 7h1v3h-1zM52 7h1v3h-1zM53 8h1v2h-1zM54 8h1v2h-1zM55 8h1v2h-1zM56 7h1v4h-1zM57 7h1v3h-1zM58 8h1v3h-1zM59 8h1v2h-1zM60 7h1v4h-1zM61 7h1v4h-1zM62 8h1v2h-1zM63 8h1v2h-1zM64 8h1v3h-1zM65 8h1v3h-1zM66 8h1v2h-1zM67 8h1v3h-1zM68 7h1v4h-1zM69 7h1v4h-1zM70 8h1v3h-1zM71 7h1v4h-1zM72 8h1v3h-1zM73 8h1v3h-1zM74 8h1v3h-1zM75 7h1v3h-1zM76 8h1v3h-1zM77 8h1v3h-1zM78 7h1v3h-1zM79 7h1v3h-1zM80 7h1v3h-1zM81 7h1v3h-1z" fill="#ff00ff" shape-rendering="crispEdges"/></svg></div>
<div class="cell" style="left:1163px;top:151px"></div>
<div class="ed" style="left:1175px;top:163px;width:29px;height:23px"></div>
<div class="t" style="left:1181px;top:167px;width:22px;overflow:hidden;">12</div>
<div class="spn" style="left:1204px;top:163px;width:18px;height:23px"><div class="su" style="top:1px;height:9px"><i class="au"></i></div><div class="su" style="top:11px;height:9px"><i class="ad"></i></div></div>
<div class="cb" style="left:1236px;top:168px"></div>
<div class="t" style="left:1251.7px;top:169px;width:12px;overflow:hidden">Sel</div>
<div class="tr" style="left:1175px;top:194px"><svg width="82" height="17" style="position:absolute;left:0;top:0"><path d="M0 8h1v2h-1zM1 8h1v2h-1zM2 7h1v3h-1zM3 8h1v2h-1zM4 8h1v2h-1zM5 8h1v2h-1zM6 8h1v2h-1zM7 8h1v3h-1zM8 8h1v3h-1zM9 7h1v4h-1zM10 7h1v4h-1zM11 8h1v2h-1zM12 8h1v2h-1zM13 8h1v3h-1zM14 7h1v4h-1zM15 7h1v3h-1zM16 7h1v3h-1zM17 8h1v3h-1zM18 7h1v3h-1zM19 6h1v4h-1zM20 5h1v3h-1zM21 4h1v3h-1zM22 3h1v4h-1zM23 3h1v3h-1zM24 2h1v4h-1zM25 3h1v3h-1zM26 2h1v3h-1zM27 2h1v4h-1zM28 3h1v2h-1zM29 3h1v3h-1zM30 4h1v4h-1zM31 5h1v3h-1zM32 6h1v3h-1zM33 7h1v3h-1zM34 8h1v3h-1zM35 9h1v4h-1zM36 10h1v3h-1zM37 11h1v3h-1zM38 12h1v3h-1zM39 13h1v2h-1zM40 13h1v2h-1zM41 13h1v2h-1zM42 12h1v3h-1zM43 12h1v3h-1zM44 8h1v7h-1zM45 7h1v3h-1zM46 7h1v3h-1zM47 7h1v4h-1zM48 8h1v3h-1zM49 7h1v3h-1zM50 8h1v2h-1zM51 7h1v3h-1zM52 8h1v3h-1zM53 7h1v3h-1zM54 7h1v3h-1zM55 7h1v3h-1zM56 8h1v3h-1zM57 7h1v4h-1zM58 8h1v2h-1zM59 7h1v3h-1zM60 7h1v3h-1zM61 8h1v2h-1zM62 8h1v2h-1zM63 8h1v3h-1zM64 7h1v4h-1zM65 8h1v3h-1zM66 8h1v3h-1zM67 8h1v3h-1zM68 8h1v2h-1zM69 8h1v3h-1zM70 8h1v2h-1zM71 8h1v3h-1zM72 8h1v2h-1zM73 7h1v4h-1zM74 8h1v2h-1zM75 8h1v3h-1zM76 8h1v2h-1zM77 8h1v3h-1zM78 7h1v4h-1zM79 7h1v4h-1zM80 7h1v3h-1zM81 8h1v3h-1z" fill="#ff00ff" shape-rendering="crispEdges"/></svg></div>
<div class="cell" style="left:1270px;top:151px"></div>
<div class="ed" style="left:1282px;top:163px;width:29px;height:23px"></div>
<div class="t" style="left:1288px;top:167px;width:22px;overflow:hidden;">13</div>
<div class="spn" style="left:1311px;top:163px;width:18px;height:23px"><div class="su" style="top:1px;height:9px"><i class="au"></i></div><div class="su" style="top:11px;height:9px"><i class="ad"></i></div></div>
<div class="cb" style="left:1343px;top:168px"></div>
<div class="t" style="left:1358.7px;top:169px;width:12px;overflow:hidden">Sel</div>
<div class="tr" style="left:1282px;top:194px"><svg width="82" height="17" style="position:absolute;left:0;top:0"><path d="M0 7h1v3h-1zM1 8h1v2h-1zM2 8h1v3h-1zM3 7h1v3h-1zM4 7h1v4h-1zM5 7h1v3h-1zM6 8h1v3h-1zM7 7h1v3h-1zM8 8h1v2h-1zM9 8h1v2h-1zM10 8h1v3h-1zM11 7h1v3h-1zM12 8h1v2h-1zM13 7h1v4h-1zM14 7h1v3h-1zM15 8h1v3h-1zM16 8h1v3h-1zM17 7h1v4h-1zM18 7h1v3h-1zM19 7h1v3h-1zM20 6h1v3h-1zM21 5h1v3h-1zM22 4h1v4h-1zM23 4h1v3h-1zM24 5h1v3h-1zM25 4h1v3h-1zM26 5h1v2h-1zM27 5h1v2h-1zM28 5h1v3h-1zM29 5h1v3h-1zM30 5h1v3h-1zM31 6h1v3h-1zM32 7h1v3h-1zM33 8h1v2h-1zM34 8h1v3h-1zM35 9h1v2h-1zM36 9h1v3h-1zM37 9h1v3h-1zM38 10h1v3h-1zM39 10h1v4h-1zM40 11h1v3h-1zM41 10h1v3h-1zM42 10h1v4h-1zM43 10h1v4h-1zM44 8h1v5h-1zM45 8h1v2h-1zM46 7h1v4h-1zM47 7h1v4h-1zM48 8h1v2h-1zM49 8h1v3h-1zM50 7h1v3h-1zM51 8h1v2h-1zM52 8h1v2h-1zM53 8h1v3h-1zM54 7h1v3h-1zM55 8h1v2h-1zM56 8h1v3h-1zM57 8h1v3h-1zM58 7h1v3h-1zM59 7h1v4h-1zM60 7h1v4h-1zM61 7h1v3h-1zM62 8h1v3h-1zM63 8h1v2h-1zM64 8h1v3h-1zM65 7h1v3h-1zM66 8h1v2h-1zM67 8h1v3h-1zM68 8h1v2h-1zM69 8h1v2h-1zM70 7h1v3h-1zM71 8h1v3h-1zM72 8h1v2h-1zM73 8h1v3h-1zM74 8h1v2h-1zM75 8h1v2h-1zM76 8h1v2h-1zM77 8h1v2h-1zM78 7h1v4h-1zM79 7h1v3h-1zM80 8h1v3h-1zM81 7h1v3h-1z" fill="#00ffff" shape-rendering="crispEdges"/></svg></div>
<div class="cell" style="left:1377px;top:151px"></div>
<div class="ed" style="left:1389px;top:163px;width:29px;height:23px"></div>
<div class="t" style="left:1395px;top:167px;width:22px;overflow:hidden;">14</div>
<div class="spn" style="left:1418px;top:163px;width:18px;height:23px"><div class="su" style="top:1px;height:9px"><i class="au"></i></div><div class="su" style="top:11px;height:9px"><i class="ad"></i></div></div>
<div class="cb" style="left:1450px;top:168px"></div>
<div class="t" style="left:1465.7px;top:169px;width:12px;overflow:hidden">Sel</div>
<div class="tr" style="left:1389px;top:194px"><svg width="82" height="17" style="position:absolute;left:0;top:0"><path d="M0 8h1v2h-1zM1 7h1v3h-1zM2 7h1v3h-1zM3 8h1v2h-1zM4 8h1v3h-1zM5 7h1v4h-1zM6 8h1v2h-1zM7 8h1v3h-1zM8 8h1v2h-1zM9 8h1v3h-1zM10 8h1v3h-1zM11 8h1v3h-1zM12 7h1v3h-1zM13 7h1v3h-1zM14 8h1v2h-1zM15 8h1v2h-1zM16 7h1v3h-1zM17 7h1v4h-1zM18 7h1v3h-1zM19 7h1v3h-1zM20 6h1v3h-1zM21 6h1v2h-1zM22 5h1v3h-1zM23 5h1v3h-1zM24 4h1v3h-1zM25 5h1v2h-1zM26 5h1v2h-1zM27 4h1v4h-1zM28 5h1v3h-1zM29 5h1v3h-1zM30 6h1v3h-1zM31 7h1v2h-1zM32 6h1v4h-1zM33 8h1v2h-1zM34 9h1v2h-1zM35 8h1v3h-1zM36 9h1v3h-1zM37 9h1v4h-1zM38 10h1v3h-1zM39 10h1v3h-1zM40 10h1v3h-1zM41 10h1v3h-1zM42 11h1v2h-1zM43 10h1v3h-1zM44 7h1v6h-1zM45 8h1v2h-1zM46 8h1v2h-1zM47 8h1v2h-1zM48 7h1v3h-1zM49 7h1v4h-1zM50 8h1v2h-1zM51 7h1v3h-1zM52 7h1v3h-1zM53 8h1v2h-1zM54 8h1v2h-1zM55 8h1v2h-1zM56 7h1v3h-1zM57 8h1v2h-1zM58 7h1v4h-1zM59 8h1v3h-1zM60 7h1v3h-1zM61 7h1v3h-1zM62 7h1v4h-1zM63 7h1v3h-1zM64 7h1v4h-1zM65 8h1v3h-1zM66 7h1v3h-1zM67 8h1v2h-1zM68 7h1v4h-1zM69 8h1v2h-1zM70 8h1v3h-1zM71 7h1v3h-1zM72 8h1v2h-1zM73 8h1v3h-1zM74 7h1v3h-1zM75 7h1v4h-1zM76 7h1v3h-1zM77 8h1v2h-1zM78 7h1v3h-1zM79 8h1v2h-1zM80 8h1v2h-1zM81 7h1v4h-1z" fill="#00ffff" shape-rendering="crispEdges"/></svg></div>
<div class="cell" style="left:735px;top:224px"></div>
<div class="ed" style="left:747px;top:236px;width:29px;height:23px"></div>
<div class="t" style="left:753px;top:240px;width:22px;overflow:hidden;">15</div>
<div class="spn" style="left:776px;top:236px;width:18px;height:23px"><div class="su" style="top:1px;height:9px"><i class="au"></i></div><div class="su" style="top:11px;height:9px"><i class="ad"></i></div></div>
<div class="cb" style="left:808px;top:241px"></div>
<div class="t" style="left:823.7px;top:242px;width:12px;overflow:hidden">Sel</div>
<div class="tr" style="left:747px;top:267px"><svg width="82" height="17" style="position:absolute;left:0;top:0"><path d="M0 8h1v3h-1zM1 7h1v3h-1zM2 7h1v4h-1zM3 7h1v4h-1zM4 7h1v3h-1zM5 8h1v3h-1zM6 7h1v3h-1zM7 7h1v3h-1zM8 7h1v3h-1zM9 8h1v2h-1zM10 7h1v3h-1zM11 8h1v3h-1zM12 8h1v2h-1zM13 8h1v2h-1zM14 7h1v3h-1zM15 8h1v3h-1zM16 8h1v2h-1zM17 7h1v4h-1zM18 7h1v3h-1zM19 8h1v2h-1zM20 8h1v3h-1zM21 7h1v4h-1zM22 7h1v3h-1zM23 8h1v2h-1zM24 8h1v3h-1zM25 7h1v3h-1zM26 8h1v2h-1zM27 7h1v4h-1zM28 8h1v2h-1zM29 7h1v4h-1zM30 7h1v3h-1zM31 8h1v2h-1zM32 8h1v3h-1zM33 8h1v3h-1zM34 7h1v4h-1zM35 8h1v3h-1zM36 7h1v3h-1zM37 7h1v3h-1zM38 8h1v3h-1zM39 7h1v3h-1zM40 8h1v2h-1zM41 8h1v3h-1zM42 7h1v3h-1zM43 8h1v2h-1zM44 7h1v3h-1zM45 7h1v4h-1zM46 7h1v3h-1zM47 8h1v2h-1zM48 8h1v2h-1zM49 8h1v2h-1zM50 7h1v4h-1zM51 7h1v4h-1zM52 8h1v3h-1zM53 7h1v4h-1zM54 8h1v2h-1zM55 7h1v3h-1zM56 8h1v2h-1zM57 7h1v3h-1zM58 7h1v4h-1zM59 8h1v2h-1zM60 7h1v4h-1zM61 7h1v3h-1zM62 8h1v3h-1zM63 8h1v3h-1zM64 7h1v4h-1zM65 8h1v3h-1zM66 8h1v2h-1zM67 8h1v2h-1zM68 7h1v4h-1zM69 7h1v3h-1zM70 8h1v3h-1zM71 8h1v2h-1zM72 8h1v2h-1zM73 8h1v2h-1zM74 7h1v3h-1zM75 8h1v2h-1zM76 7h1v3h-1zM77 8h1v2h-1zM78 8h1v2h-1zM79 7h1v4h-1zM80 8h1v3h-1zM81 8h1v2h-1z" fill="#0000ff" shape-rendering="crispEdges"/></svg></div>
<div class="cell" style="left:842px;top:224px"></div>
<div class="ed" style="left:854px;top:236px;width:29px;height:23px"></div>
<div class="t" style="left:860px;top:240px;width:22px;overflow:hidden;">16</div>
<div class="spn" style="left:883px;top:236px;width:18px;height:23px"><div class="su" style="top:1px;height:9px"><i class="au"></i></div><div class="su" style="top:11px;height:9px"><i class="ad"></i></div></div>
<div class="cb" style="left:915px;top:241px"></div>
<div class="t" style="left:930.7px;top:242px;width:12px;overflow:hidden">Sel</div>
<div class="tr" style="left:854px;top:267px"><svg width="82" height="17" style="position:absolute;left:0;top:0"><path d="M0 8h1v3h-1zM1 7h1v3h-1zM2 8h1v2h-1zM3 8h1v3h-1zM4 8h1v3h-1zM5 7h1v4h-1zM6 8h1v2h-1zM7 8h1v3h-1zM8 8h1v2h-1zM9 8h1v2h-1zM10 7h1v3h-1zM11 7h1v4h-1zM12 7h1v3h-1zM13 8h1v2h-1zM14 8h1v2h-1zM15 7h1v3h-1zM16 8h1v3h-1zM17 7h1v3h-1zM18 7h1v3h-1zM19 6h1v3h-1zM20 5h1v3h-1zM21 4h1v3h-1zM22 4h1v2h-1zM23 2h1v4h-1zM24 3h1v3h-1zM25 2h1v3h-1zM26 2h1v3h-1zM27 3h1v3h-1zM28 3h1v3h-1zM29 4h1v2h-1zM30 4h1v3h-1zM31 5h1v3h-1zM32 6h1v3h-1zM33 7h1v4h-1zM34 8h1v3h-1zM35 9h1v3h-1zM36 10h1v3h-1zM37 11h1v3h-1zM38 12h1v3h-1zM39 13h1v2h-1zM40 13h1v2h-1zM41 13h1v2h-1zM42 13h1v3h-1zM43 12h1v4h-1zM44 8h1v7h-1zM45 8h1v3h-1zM46 7h1v3h-1zM47 8h1v3h-1zM48 8h1v3h-1zM49 7h1v3h-1zM50 7h1v3h-1zM51 7h1v4h-1zM52 8h1v2h-1zM53 8h1v2h-1zM54 7h1v4h-1zM55 8h1v2h-1zM56 7h1v4h-1zM57 8h1v2h-1zM58 8h1v3h-1zM59 8h1v2h-1zM60 8h1v3h-1zM61 8h1v2h-1zM62 7h1v3h-1zM63 8h1v2h-1zM64 8h1v3h-1zM65 8h1v2h-1zM66 8h1v2h-1zM67 8h1v3h-1zM68 8h1v3h-1zM69 8h1v2h-1zM70 7h1v3h-1zM71 7h1v3h-1zM72 7h1v4h-1zM73 8h1v2h-1zM74 8h1v2h-1zM75 7h1v3h-1zM76 7h1v3h-1zM77 8h1v3h-1zM78 8h1v3h-1zM79 7h1v4h-1zM80 8h1v2h-1zM81 7h1v3h-1z" fill="#ff00ff" shape-rendering="crispEdges"/></svg></div>
<div class="cell" style="left:949px;top:224px"></div>
<div class="ed" style="left:961px;top:236px;width:29px;height:23px"></div>
<div class="t" style="left:967px;top:240px;width:22px;overflow:hidden;">17</div>
<div class="spn" style="left:990px;top:236px;width:18px;height:23px"><div class="su" style="top:1px;height:9px"><i class="au"></i></div><div class="su" style="top:11px;height:9px"><i class="ad"></i></div></div>
<div class="cb" style="left:1022px;top:241px"></div>
<div class="t" style="left:1037.7px;top:242px;width:12px;overflow:hidden">Sel</div>
<div class="tr" style="left:961px;top:267px"><svg width="82" height="17" style="position:absolute;left:0;top:0"><path d="M0 8h1v3h-1zM1 8h1v2h-1zM2 7h1v3h-1zM3 8h1v2h-1zM4 8h1v3h-1zM5 7h1v4h-1zM6 8h1v3h-1zM7 7h1v3h-1zM8 7h1v4h-1zM9 8h1v3h-1zM10 7h1v3h-1zM11 8h1v3h-1zM12 8h1v2h-1zM13 7h1v3h-1zM14 7h1v3h-1zM15 7h1v3h-1zM16 8h1v2h-1zM17 7h1v4h-1zM18 7h1v3h-1zM19 6h1v3h-1zM20 4h1v3h-1zM21 3h1v3h-1zM22 2h1v3h-1zM23 1h1v3h-1zM24 0h1v4h-1zM25 0h1v3h-1zM26 0h1v4h-1zM27 1h1v3h-1zM28 1h1v3h-1zM29 2h1v3h-1zM30 3h1v3h-1zM31 4h1v4h-1zM32 6h1v3h-1zM33 7h1v4h-1zM34 8h1v4h-1zM35 10h1v3h-1zM36 11h1v4h-1zM37 12h1v4h-1zM38 14h1v3h-1zM39 15h1v2h-1zM40 14h1v3h-1zM41 14h1v3h-1zM42 15h1v2h-1zM43 14h1v3h-1zM44 8h1v9h-1zM45 8h1v3h-1zM46 8h1v2h-1zM47 8h1v2h-1zM48 8h1v2h-1zM49 7h1v3h-1zM50 7h1v3h-1zM51 7h1v3h-1zM52 8h1v2h-1zM53 7h1v3h-1zM54 8h1v2h-1zM55 8h1v2h-1zM56 8h1v2h-1zM57 8h1v2h-1zM58 8h1v3h-1zM59 7h1v3h-1zM60 7h1v4h-1zM61 7h1v4h-1zM62 8h1v3h-1zM63 8h1v2h-1zM64 7h1v4h-1zM65 8h1v2h-1zM66 8h1v3h-1zM67 8h1v3h-1zM68 8h1v3h-1zM69 8h1v3h-1zM70 8h1v2h-1zM71 7h1v4h-1zM72 8h1v2h-1zM73 8h1v3h-1zM74 8h1v2h-1zM75 8h1v2h-1zM76 8h1v2h-1zM77 7h1v3h-1zM78 8h1v2h-1zM79 8h1v3h-1zM80 8h1v3h-1zM81 7h1v4h-1z" fill="#ff0000" shape-rendering="crispEdges"/></svg></div>
<div class="cell" style="left:1056px;top:224px"></div>
<div class="ed" style="left:1068px;top:236px;width:29px;height:23px"></div>
<div class="t" style="left:1074px;top:240px;width:22px;overflow:hidden;">18</div>
<div class="spn" style="left:1097px;top:236px;width:18px;height:23px"><div class="su" style="top:1px;height:9px"><i class="au"></i></div><div class="su" style="top:11px;height:9px"><i class="ad"></i></div></div>
<div class="cb" style="left:1129px;top:241px"></div>
<div class="t" style="left:1144.7px;top:242px;width:12px;overflow:hidden">Sel</div>
<div class="tr" style="left:1068px;top:267px"><svg width="82" height="17" style="position:absolute;left:0;top:0"><path d="M0 7h1v3h-1zM1 8h1v3h-1zM2 8h1v3h-1zM3 8h1v3h-1zM4 8h1v3h-1zM5 7h1v3h-1zM6 8h1v2h-1zM7 7h1v3h-1zM8 8h1v2h-1zM9 7h1v3h-1zM10 7h1v4h-1zM11 8h1v2h-1zM12 8h1v3h-1zM13 8h1v3h-1zM14 8h1v3h-1zM15 8h1v2h-1zM16 8h1v2h-1zM17 8h1v3h-1zM18 6h1v5h-1zM19 5h1v4h-1zM20 4h1v4h-1zM21 3h1v3h-1zM22 2h1v2h-1zM23 1h1v3h-1zM24 1h1v3h-1zM25 1h1v2h-1zM26 1h1v3h-1zM27 1h1v3h-1zM28 1h1v3h-1zM29 2h1v3h-1zM30 3h1v3h-1zM31 4h1v4h-1zM32 6h1v3h-1zM33 7h1v3h-1zM34 8h1v3h-1zM35 10h1v3h-1zM36 11h1v4h-1zM37 12h1v3h-1zM38 14h1v3h-1zM39 14h1v3h-1zM40 14h1v3h-1zM41 15h1v2h-1zM42 15h1v2h-1zM43 14h1v3h-1zM44 8h1v9h-1zM45 8h1v3h-1zM46 7h1v3h-1zM47 8h1v3h-1zM48 8h1v2h-1zM49 7h1v3h-1zM50 7h1v4h-1zM51 8h1v2h-1zM52 8h1v2h-1zM53 7h1v4h-1zM54 8h1v2h-1zM55 7h1v3h-1zM56 8h1v3h-1zM57 7h1v4h-1zM58 7h1v3h-1zM59 7h1v4h-1zM60 7h1v4h-1zM61 8h1v3h-1zM62 8h1v3h-1zM63 7h1v3h-1zM64 8h1v3h-1zM65 8h1v3h-1zM66 8h1v2h-1zM67 8h1v3h-1zM68 8h1v3h-1zM69 8h1v2h-1zM70 8h1v2h-1zM71 7h1v3h-1zM72 7h1v3h-1zM73 8h1v2h-1zM74 7h1v3h-1zM75 8h1v3h-1zM76 8h1v3h-1zM77 7h1v3h-1zM78 8h1v2h-1zM79 7h1v3h-1zM80 8h1v3h-1zM81 7h1v3h-1z" fill="#ff0000" shape-rendering="crispEdges"/></svg></div>
<div class="cell" style="left:1163px;top:224px"></div>
<div class="ed" style="left:1175px;top:236px;width:29px;height:23px"></div>
<div class="t" style="left:1181px;top:240px;width:22px;overflow:hidden;">19</div>
<div class="spn" style="left:1204px;top:236px;width:18px;height:23px"><div class="su" style="top:1px;height:9px"><i class="au"></i></div><div class="su" style="top:11px;height:9px"><i class="ad"></i></div></div>
<div class="cb" style="left:1236px;top:241px"></div>
<div class="t" style="left:1251.7px;top:242px;width:12px;overflow:hidden">Sel</div>
<div class="tr" style="left:1175px;top:267px"><svg width="82" height="17" style="position:absolute;left:0;top:0"><path d="M0 7h1v4h-1zM1 7h1v3h-1zM2 8h1v3h-1zM3 7h1v3h-1zM4 7h1v4h-1zM5 7h1v4h-1zM6 8h1v2h-1zM7 8h1v3h-1zM8 7h1v4h-1zM9 8h1v3h-1zM10 8h1v2h-1zM11 7h1v3h-1zM12 8h1v3h-1zM13 7h1v4h-1zM14 8h1v2h-1zM15 8h1v2h-1zM16 8h1v3h-1zM17 7h1v3h-1zM18 7h1v4h-1zM19 7h1v2h-1zM20 6h1v3h-1zM21 5h1v4h-1zM22 5h1v3h-1zM23 4h1v3h-1zM24 4h1v4h-1zM25 4h1v4h-1zM26 4h1v3h-1zM27 4h1v4h-1zM28 5h1v2h-1zM29 5h1v3h-1zM30 5h1v3h-1zM31 6h1v3h-1zM32 7h1v3h-1zM33 7h1v3h-1zM34 8h1v3h-1zM35 8h1v3h-1zM36 9h1v3h-1zM37 9h1v4h-1zM38 10h1v3h-1zM39 11h1v2h-1zM40 11h1v3h-1zM41 10h1v3h-1zM42 11h1v3h-1zM43 11h1v2h-1zM44 8h1v6h-1zM45 8h1v2h-1zM46 7h1v3h-1zM47 7h1v4h-1zM48 8h1v3h-1zM49 7h1v4h-1zM50 8h1v3h-1zM51 8h1v2h-1zM52 8h1v2h-1zM53 8h1v2h-1zM54 8h1v3h-1zM55 8h1v2h-1zM56 7h1v3h-1zM57 7h1v3h-1zM58 7h1v3h-1zM59 7h1v3h-1zM60 7h1v3h-1zM61 7h1v4h-1zM62 7h1v3h-1zM63 8h1v3h-1zM64 8h1v2h-1zM65 7h1v4h-1zM66 7h1v4h-1zM67 8h1v3h-1zM68 8h1v3h-1zM69 8h1v2h-1zM70 8h1v2h-1zM71 8h1v3h-1zM72 8h1v2h-1zM73 8h1v2h-1zM74 8h1v2h-1zM75 8h1v3h-1zM76 8h1v3h-1zM77 8h1v2h-1zM78 8h1v2h-1zM79 8h1v3h-1zM80 7h1v3h-1zM81 8h1v2h-1z" fill="#00ffff" shape-rendering="crispEdges"/></svg></div>
<div class="cell" style="left:1270px;top:224px"></div>
<div class="ed" style="left:1282px;top:236px;width:29px;height:23px"></div>
<div class="t" style="left:1288px;top:240px;width:22px;overflow:hidden;">20</div>
<div class="spn" style="left:1311px;top:236px;width:18px;height:23px"><div class="su" style="top:1px;height:9px"><i class="au"></i></div><div class="su" style="top:11px;height:9px"><i class="ad"></i></div></div>
<div class="cb" style="left:1343px;top:241px"></div>
<div class="t" style="left:1358.7px;top:242px;width:12px;overflow:hidden">Sel</div>
<div class="tr" style="left:1282px;top:267px"><svg width="82" height="17" style="position:absolute;left:0;top:0"><path d="M0 8h1v2h-1zM1 8h1v2h-1zM2 8h1v2h-1zM3 7h1v3h-1zM4 7h1v3h-1zM5 8h1v2h-1zM6 7h1v4h-1zM7 8h1v3h-1zM8 7h1v3h-1zM9 8h1v3h-1zM10 8h1v2h-1zM11 7h1v3h-1zM12 7h1v4h-1zM13 8h1v3h-1zM14 7h1v3h-1zM15 7h1v3h-1zM16 7h1v3h-1zM17 8h1v2h-1zM18 7h1v3h-1zM19 5h1v4h-1zM20 4h1v3h-1zM21 3h1v3h-1zM22 1h1v4h-1zM23 1h1v3h-1zM24 1h1v2h-1zM25 1h1v2h-1zM26 1h1v2h-1zM27 0h1v3h-1zM28 1h1v3h-1zM29 2h1v3h-1zM30 3h1v3h-1zM31 4h1v4h-1zM32 6h1v3h-1zM33 7h1v3h-1zM34 9h1v3h-1zM35 10h1v3h-1zM36 11h1v3h-1zM37 12h1v3h-1zM38 14h1v3h-1zM39 15h1v2h-1zM40 14h1v3h-1zM41 14h1v3h-1zM42 15h1v2h-1zM43 15h1v2h-1zM44 8h1v9h-1zM45 7h1v3h-1zM46 7h1v3h-1zM47 8h1v2h-1zM48 8h1v3h-1zM49 7h1v4h-1zM50 7h1v4h-1zM51 8h1v3h-1zM52 7h1v4h-1zM53 7h1v4h-1zM54 8h1v3h-1zM55 8h1v2h-1zM56 7h1v3h-1zM57 8h1v2h-1zM58 8h1v3h-1zM59 7h1v3h-1zM60 8h1v3h-1zM61 7h1v3h-1zM62 7h1v4h-1zM63 7h1v4h-1zM64 8h1v2h-1zM65 7h1v4h-1zM66 7h1v3h-1zM67 7h1v3h-1zM68 7h1v3h-1zM69 7h1v4h-1zM70 7h1v3h-1zM71 7h1v3h-1zM72 7h1v3h-1zM73 8h1v3h-1zM74 8h1v3h-1zM75 8h1v3h-1zM76 8h1v2h-1zM77 7h1v3h-1zM78 8h1v2h-1zM79 8h1v2h-1zM80 8h1v3h-1zM81 8h1v2h-1z" fill="#ff0000" shape-rendering="crispEdges"/></svg></div>
<div class="cell" style="left:1377px;top:224px"></div>
<div class="ed" style="left:1389px;top:236px;width:29px;height:23px"></div>
<div class="t" style="left:1395px;top:240px;width:22px;overflow:hidden;">21</div>
<div class="spn" style="left:1418px;top:236px;width:18px;height:23px"><div class="su" style="top:1px;height:9px"><i class="au"></i></div><div class="su" style="top:11px;height:9px"><i class="ad"></i></div></div>
<div class="cb" style="left:1450px;top:241px"></div>
<div class="t" style="left:1465.7px;top:242px;width:12px;overflow:hidden">Sel</div>
<div class="tr" style="left:1389px;top:267px"><svg width="82" height="17" style="position:absolute;left:0;top:0"><path d="M0 8h1v2h-1zM1 7h1v4h-1zM2 8h1v3h-1zM3 8h1v2h-1zM4 8h1v2h-1zM5 7h1v3h-1zM6 8h1v3h-1zM7 8h1v2h-1zM8 7h1v3h-1zM9 8h1v2h-1zM10 7h1v4h-1zM11 8h1v2h-1zM12 8h1v3h-1zM13 8h1v2h-1zM14 8h1v2h-1zM15 8h1v2h-1zM16 8h1v2h-1zM17 8h1v2h-1zM18 7h1v3h-1zM19 6h1v3h-1zM20 5h1v3h-1zM21 4h1v4h-1zM22 3h1v3h-1zM23 3h1v3h-1zM24 3h1v2h-1zM25 2h1v4h-1zM26 3h1v2h-1zM27 3h1v2h-1zM28 3h1v2h-1zM29 3h1v3h-1zM30 4h1v3h-1zM31 5h1v4h-1zM32 6h1v3h-1zM33 7h1v3h-1zM34 8h1v3h-1zM35 9h1v3h-1zM36 10h1v3h-1zM37 11h1v3h-1zM38 12h1v3h-1zM39 13h1v2h-1zM40 13h1v3h-1zM41 12h1v4h-1zM42 12h1v3h-1zM43 13h1v3h-1zM44 8h1v8h-1zM45 8h1v3h-1zM46 7h1v3h-1zM47 8h1v3h-1zM48 7h1v3h-1zM49 8h1v2h-1zM50 8h1v2h-1zM51 8h1v2h-1zM52 7h1v3h-1zM53 8h1v3h-1zM54 8h1v2h-1zM55 7h1v3h-1zM56 7h1v4h-1zM57 8h1v2h-1zM58 7h1v3h-1zM59 8h1v3h-1zM60 7h1v4h-1zM61 8h1v2h-1zM62 8h1v2h-1zM63 8h1v3h-1zM64 7h1v3h-1zM65 8h1v3h-1zM66 8h1v2h-1zM67 7h1v3h-1zM68 7h1v3h-1zM69 7h1v3h-1zM70 8h1v3h-1zM71 8h1v3h-1zM72 8h1v3h-1zM73 7h1v3h-1zM74 8h1v2h-1zM75 8h1v3h-1zM76 7h1v3h-1zM77 7h1v3h-1zM78 8h1v2h-1zM79 8h1v2h-1zM80 8h1v3h-1zM81 8h1v2h-1z" fill="#ff00ff" shape-rendering="crispEdges"/></svg></div>
<div class="cell" style="left:735px;top:297px"></div>
<div class="ed" style="left:747px;top:309px;width:29px;height:23px"></div>
<div class="t" style="left:753px;top:313px;width:22px;overflow:hidden;">22</div>
<div class="spn" style="left:776px;top:309px;width:18px;height:23px"><div class="su" style="top:1px;height:9px"><i class="au"></i></div><div class="su" style="top:11px;height:9px"><i class="ad"></i></div></div>
<div class="cb" style="left:808px;top:314px"></div>
<div class="t" style="left:823.7px;top:315px;width:12px;overflow:hidden">Sel</div>
<div class="tr" style="left:747px;top:340px"><svg width="82" height="17" style="position:absolute;left:0;top:0"><path d="M0 8h1v2h-1zM1 8h1v2h-1zM2 7h1v3h-1zM3 8h1v3h-1zM4 8h1v3h-1zM5 8h1v3h-1zM6 8h1v3h-1zM7 7h1v3h-1zM8 8h1v2h-1zM9 8h1v3h-1zM10 8h1v2h-1zM11 7h1v3h-1zM12 7h1v3h-1zM13 7h1v3h-1zM14 7h1v4h-1zM15 8h1v3h-1zM16 8h1v3h-1zM17 8h1v2h-1zM18 7h1v3h-1zM19 5h1v4h-1zM20 4h1v3h-1zM21 2h1v4h-1zM22 1h1v4h-1zM23 1h1v3h-1zM24 1h1v2h-1zM25 0h1v3h-1zM26 1h1v2h-1zM27 1h1v3h-1zM28 1h1v2h-1zM29 2h1v3h-1zM30 3h1v3h-1zM31 4h1v4h-1zM32 6h1v3h-1zM33 7h1v4h-1zM34 8h1v3h-1zM35 9h1v4h-1zM36 11h1v3h-1zM37 12h1v4h-1zM38 13h1v3h-1zM39 15h1v2h-1zM40 15h1v2h-1zM41 15h1v2h-1zM42 15h1v2h-1zM43 14h1v3h-1zM44 8h1v9h-1zM45 8h1v2h-1zM46 8h1v2h-1zM47 8h1v2h-1zM48 8h1v3h-1zM49 8h1v2h-1zM50 8h1v2h-1zM51 7h1v3h-1zM52 7h1v3h-1zM53 7h1v3h-1zM54 8h1v3h-1zM55 7h1v4h-1zM56 8h1v3h-1zM57 7h1v3h-1zM58 7h1v3h-1zM59 8h1v2h-1zM60 7h1v3h-1zM61 7h1v3h-1zM62 8h1v2h-1zM63 7h1v4h-1zM64 7h1v4h-1zM65 7h1v4h-1zM66 8h1v2h-1zM67 8h1v3h-1zM68 8h1v3h-1zM69 8h1v3h-1zM70 7h1v4h-1zM71 7h1v3h-1zM72 8h1v2h-1zM73 7h1v4h-1zM74 7h1v3h-1zM75 8h1v2h-1zM76 8h1v2h-1zM77 7h1v4h-1zM78 8h1v2h-1zM79 8h1v2h-1zM80 7h1v4h-1zM81 7h1v3h-1z" fill="#ff0000" shape-rendering="crispEdges"/></svg></div>
<div class="cell" style="left:842px;top:297px"></div>
<div class="ed" style="left:854px;top:309px;width:29px;height:23px"></div>
<div class="t" style="left:860px;top:313px;width:22px;overflow:hidden;">23</div>
<div class="spn" style="left:883px;top:309px;width:18px;height:23px"><div class="su" style="top:1px;height:9px"><i class="au"></i></div><div class="su" style="top:11px;height:9px"><i class="ad"></i></div></div>
<div class="cb" style="left:915px;top:314px"></div>
<div class="t" style="left:930.7px;top:315px;width:12px;overflow:hidden">Sel</div>
<div class="tr" style="left:854px;top:340px"><svg width="82" height="17" style="position:absolute;left:0;top:0"><path d="M0 7h1v3h-1zM1 8h1v3h-1zM2 8h1v3h-1zM3 8h1v2h-1zM4 7h1v3h-1zM5 7h1v4h-1zM6 8h1v2h-1zM7 8h1v3h-1zM8 7h1v3h-1zM9 7h1v3h-1zM10 7h1v4h-1zM11 8h1v2h-1zM12 7h1v3h-1zM13 8h1v2h-1zM14 8h1v2h-1zM15 8h1v3h-1zM16 7h1v3h-1zM17 7h1v3h-1zM18 8h1v3h-1zM19 8h1v2h-1zM20 8h1v3h-1zM21 7h1v3h-1zM22 8h1v3h-1zM23 8h1v2h-1zM24 8h1v2h-1zM25 7h1v3h-1zM26 8h1v2h-1zM27 7h1v3h-1zM28 8h1v2h-1zM29 8h1v2h-1zM30 8h1v2h-1zM31 8h1v3h-1zM32 8h1v3h-1zM33 8h1v3h-1zM34 7h1v3h-1zM35 7h1v3h-1zM36 7h1v4h-1zM37 8h1v3h-1zM38 8h1v2h-1zM39 7h1v3h-1zM40 8h1v3h-1zM41 8h1v3h-1zM42 8h1v3h-1zM43 7h1v3h-1zM44 7h1v4h-1zM45 8h1v2h-1zM46 7h1v3h-1zM47 7h1v4h-1zM48 8h1v3h-1zM49 7h1v3h-1zM50 8h1v3h-1zM51 8h1v2h-1zM52 8h1v2h-1zM53 7h1v3h-1zM54 8h1v3h-1zM55 8h1v2h-1zM56 7h1v3h-1zM57 8h1v2h-1zM58 7h1v4h-1zM59 8h1v3h-1zM60 7h1v3h-1zM61 7h1v3h-1zM62 7h1v3h-1zM63 7h1v4h-1zM64 7h1v3h-1zM65 8h1v2h-1zM66 7h1v3h-1zM67 7h1v3h-1zM68 7h1v3h-1zM69 7h1v3h-1zM70 7h1v4h-1zM71 7h1v3h-1zM72 8h1v2h-1zM73 8h1v2h-1zM74 8h1v2h-1zM75 7h1v3h-1zM76 7h1v3h-1zM77 7h1v3h-1zM78 8h1v2h-1zM79 8h1v3h-1zM80 8h1v2h-1zM81 7h1v4h-1z" fill="#0000ff" shape-rendering="crispEdges"/></svg></div>
<div class="cell" style="left:949px;top:297px"></div>
<div class="ed" style="left:961px;top:309px;width:29px;height:23px"></div>
<div class="t" style="left:967px;top:313px;width:22px;overflow:hidden;">24</div>
<div class="spn" style="left:990px;top:309px;width:18px;height:23px"><div class="su" style="top:1px;height:9px"><i class="au"></i></div><div class="su" style="top:11px;height:9px"><i class="ad"></i></div></div>
<div class="cb" style="left:1022px;top:314px"></div>
<div class="t" style="left:1037.7px;top:315px;width:12px;overflow:hidden">Sel</div>
<div class="tr" style="left:961px;top:340px"><svg width="82" height="17" style="position:absolute;left:0;top:0"><path d="M0 8h1v3h-1zM1 7h1v3h-1zM2 7h1v3h-1zM3 8h1v2h-1zM4 7h1v3h-1zM5 7h1v4h-1zM6 7h1v3h-1zM7 8h1v2h-1zM8 8h1v3h-1zM9 7h1v3h-1zM10 8h1v3h-1zM11 7h1v3h-1zM12 7h1v3h-1zM13 8h1v2h-1zM14 7h1v4h-1zM15 7h1v3h-1zM16 8h1v2h-1zM17 8h1v2h-1zM18 7h1v3h-1zM19 7h1v3h-1zM20 7h1v2h-1zM21 5h1v4h-1zM22 5h1v3h-1zM23 4h1v4h-1zM24 4h1v4h-1zM25 4h1v3h-1zM26 5h1v2h-1zM27 5h1v3h-1zM28 5h1v3h-1zM29 5h1v3h-1zM30 6h1v2h-1zM31 6h1v3h-1zM32 7h1v3h-1zM33 7h1v3h-1zM34 8h1v3h-1zM35 9h1v3h-1zM36 9h1v3h-1zM37 10h1v2h-1zM38 10h1v3h-1zM39 11h1v2h-1zM40 11h1v2h-1zM41 10h1v3h-1zM42 10h1v4h-1zM43 10h1v3h-1zM44 8h1v6h-1zM45 8h1v3h-1zM46 8h1v3h-1zM47 8h1v2h-1zM48 7h1v4h-1zM49 7h1v4h-1zM50 8h1v2h-1zM51 8h1v3h-1zM52 8h1v2h-1zM53 8h1v2h-1zM54 8h1v2h-1zM55 8h1v3h-1zM56 7h1v3h-1zM57 8h1v3h-1zM58 8h1v3h-1zM59 7h1v3h-1zM60 7h1v3h-1zM61 7h1v4h-1zM62 8h1v3h-1zM63 8h1v2h-1zM64 7h1v4h-1zM65 7h1v4h-1zM66 8h1v3h-1zM67 8h1v3h-1zM68 8h1v3h-1zM69 8h1v2h-1zM70 8h1v2h-1zM71 8h1v2h-1zM72 8h1v2h-1zM73 7h1v3h-1zM74 8h1v3h-1zM75 8h1v3h-1zM76 8h1v2h-1zM77 7h1v3h-1zM78 7h1v4h-1zM79 7h1v4h-1zM80 8h1v2h-1zM81 8h1v3h-1z" fill="#00ffff" shape-rendering="crispEdges"/></svg></div>
<div class="cell" style="left:1056px;top:297px"></div>
<div class="ed" style="left:1068px;top:309px;width:29px;height:23px"></div>
<div class="t" style="left:1074px;top:313px;width:22px;overflow:hidden;">25</div>
<div class="spn" style="left:1097px;top:309px;width:18px;height:23px"><div class="su" style="top:1px;height:9px"><i class="au"></i></div><div class="su" style="top:11px;height:9px"><i class="ad"></i></div></div>
<div class="cb" style="left:1129px;top:314px"></div>
<div class="t" style="left:1144.7px;top:315px;width:12px;overflow:hidden">Sel</div>
<div class="tr" style="left:1068px;top:340px"><svg width="82" height="17" style="position:absolute;left:0;top:0"><path d="M0 7h1v3h-1zM1 7h1v4h-1zM2 7h1v3h-1zM3 8h1v2h-1zM4 7h1v4h-1zM5 8h1v3h-1zM6 7h1v3h-1zM7 8h1v3h-1zM8 8h1v2h-1zM9 8h1v3h-1zM10 8h1v3h-1zM11 7h1v3h-1zM12 8h1v3h-1zM13 8h1v2h-1zM14 8h1v2h-1zM15 7h1v3h-1zM16 7h1v4h-1zM17 7h1v4h-1zM18 7h1v3h-1zM19 6h1v4h-1zM20 6h1v2h-1zM21 4h1v3h-1zM22 3h1v4h-1zM23 3h1v3h-1zM24 3h1v3h-1zM25 3h1v3h-1zM26 2h1v3h-1zM27 3h1v3h-1zM28 3h1v3h-1zM29 4h1v2h-1zM30 4h1v4h-1zM31 5h1v3h-1zM32 6h1v4h-1zM33 8h1v2h-1zM34 8h1v3h-1zM35 9h1v4h-1zM36 10h1v3h-1zM37 11h1v4h-1zM38 12h1v3h-1zM39 12h1v4h-1zM40 13h1v2h-1zM41 13h1v2h-1zM42 12h1v4h-1zM43 13h1v3h-1zM44 8h1v8h-1zM45 7h1v3h-1zM46 8h1v2h-1zM47 7h1v4h-1zM48 8h1v2h-1zM49 8h1v2h-1zM50 7h1v3h-1zM51 7h1v4h-1zM52 8h1v3h-1zM53 8h1v2h-1zM54 8h1v2h-1zM55 8h1v2h-1zM56 8h1v2h-1zM57 7h1v3h-1zM58 8h1v3h-1zM59 8h1v3h-1zM60 8h1v2h-1zM61 8h1v2h-1zM62 8h1v3h-1zM63 7h1v3h-1zM64 8h1v2h-1zM65 8h1v3h-1zM66 7h1v3h-1zM67 8h1v3h-1zM68 7h1v4h-1zM69 8h1v2h-1zM70 8h1v3h-1zM71 8h1v3h-1zM72 7h1v3h-1zM73 7h1v3h-1zM74 7h1v4h-1zM75 8h1v3h-1zM76 7h1v3h-1zM77 7h1v4h-1zM78 8h1v3h-1zM79 8h1v3h-1zM80 8h1v2h-1zM81 7h1v4h-1z" fill="#ff00ff" shape-rendering="crispEdges"/></svg></div>
<div class="cell" style="left:1163px;top:297px"></div>
<div class="ed" style="left:1175px;top:309px;width:29px;height:23px"></div>
<div class="t" style="left:1181px;top:313px;width:22px;overflow:hidden;">26</div>
<div class="spn" style="left:1204px;top:309px;width:18px;height:23px"><div class="su" style="top:1px;height:9px"><i class="au"></i></div><div class="su" style="top:11px;height:9px"><i class="ad"></i></div></div>
<div class="cb" style="left:1236px;top:314px"></div>
<div class="t" style="left:1251.7px;top:315px;width:12px;overflow:hidden">Sel</div>
<div class="tr" style="left:1175px;top:340px"><svg width="82" height="17" style="position:absolute;left:0;top:0"><path d="M0 7h1v4h-1zM1 8h1v2h-1zM2 8h1v3h-1zM3 8h1v3h-1zM4 7h1v3h-1zM5 8h1v2h-1zM6 8h1v2h-1zM7 8h1v2h-1zM8 8h1v2h-1zM9 8h1v2h-1zM10 7h1v3h-1zM11 8h1v2h-1zM12 8h1v3h-1zM13 7h1v4h-1zM14 7h1v3h-1zM15 7h1v3h-1zM16 8h1v3h-1zM17 8h1v3h-1zM18 7h1v2h-1zM19 6h1v3h-1zM20 4h1v3h-1zM21 3h1v3h-1zM22 1h1v4h-1zM23 1h1v3h-1zM24 1h1v2h-1zM25 0h1v4h-1zM26 1h1v2h-1zM27 0h1v4h-1zM28 1h1v3h-1zM29 1h1v4h-1zM30 3h1v3h-1zM31 4h1v4h-1zM32 6h1v3h-1zM33 7h1v4h-1zM34 9h1v3h-1zM35 9h1v4h-1zM36 11h1v3h-1zM37 12h1v3h-1zM38 14h1v3h-1zM39 14h1v3h-1zM40 14h1v3h-1zM41 14h1v3h-1zM42 14h1v3h-1zM43 14h1v3h-1zM44 8h1v9h-1zM45 7h1v3h-1zM46 8h1v3h-1zM47 7h1v3h-1zM48 8h1v2h-1zM49 8h1v2h-1zM50 8h1v3h-1zM51 7h1v4h-1zM52 7h1v3h-1zM53 8h1v3h-1zM54 8h1v2h-1zM55 8h1v2h-1zM56 8h1v2h-1zM57 8h1v3h-1zM58 7h1v3h-1zM59 8h1v3h-1zM60 8h1v3h-1zM61 7h1v4h-1zM62 8h1v2h-1zM63 8h1v2h-1zM64 7h1v3h-1zM65 8h1v3h-1zM66 7h1v4h-1zM67 8h1v3h-1zM68 8h1v3h-1zM69 8h1v2h-1zM70 7h1v3h-1zM71 7h1v3h-1zM72 8h1v2h-1zM73 8h1v3h-1zM74 8h1v3h-1zM75 8h1v2h-1zM76 8h1v2h-1zM77 7h1v3h-1zM78 7h1v4h-1zM79 8h1v3h-1zM80 7h1v3h-1zM81 7h1v4h-1z" fill="#ff0000" shape-rendering="crispEdges"/></svg></div>
<div class="cell" style="left:1270px;top:297px"></div>
<div class="ed" style="left:1282px;top:309px;width:29px;height:23px"></div>
<div class="t" style="left:1288px;top:313px;width:22px;overflow:hidden;">27</div>
<div class="spn" style="left:1311px;top:309px;width:18px;height:23px"><div class="su" style="top:1px;height:9px"><i class="au"></i></div><div class="su" style="top:11px;height:9px"><i class="ad"></i></div></div>
<div class="cb" style="left:1343px;top:314px"></div>
<div class="t" style="left:1358.7px;top:315px;width:12px;overflow:hidden">Sel</div>
<div class="tr" style="left:1282px;top:340px"><svg width="82" height="17" style="position:absolute;left:0;top:0"><path d="M0 8h1v3h-1zM1 8h1v3h-1zM2 8h1v2h-1zM3 8h1v3h-1zM4 8h1v2h-1zM5 8h1v2h-1zM6 7h1v3h-1zM7 8h1v2h-1zM8 7h1v4h-1zM9 7h1v3h-1zM10 8h1v2h-1zM11 8h1v2h-1zM12 7h1v3h-1zM13 8h1v3h-1zM14 8h1v2h-1zM15 7h1v4h-1zM16 7h1v3h-1zM17 8h1v3h-1zM18 7h1v3h-1zM19 5h1v4h-1zM20 4h1v3h-1zM21 3h1v3h-1zM22 1h1v4h-1zM23 1h1v3h-1zM24 1h1v3h-1zM25 1h1v3h-1zM26 0h1v3h-1zM27 0h1v3h-1zM28 1h1v3h-1zM29 2h1v3h-1zM30 3h1v3h-1zM31 4h1v4h-1zM32 5h1v4h-1zM33 7h1v3h-1zM34 8h1v3h-1zM35 10h1v3h-1zM36 11h1v3h-1zM37 12h1v3h-1zM38 14h1v3h-1zM39 15h1v2h-1zM40 14h1v3h-1zM41 14h1v3h-1zM42 15h1v2h-1zM43 14h1v3h-1zM44 8h1v9h-1zM45 8h1v3h-1zM46 7h1v3h-1zM47 7h1v4h-1zM48 8h1v2h-1zM49 8h1v3h-1zM50 7h1v3h-1zM51 8h1v2h-1zM52 7h1v3h-1zM53 8h1v2h-1zM54 7h1v4h-1zM55 7h1v4h-1zM56 7h1v4h-1zM57 7h1v3h-1zM58 7h1v3h-1zM59 8h1v2h-1zM60 7h1v4h-1zM61 8h1v2h-1zM62 7h1v3h-1zM63 8h1v3h-1zM64 8h1v3h-1zM65 7h1v3h-1zM66 8h1v2h-1zM67 8h1v3h-1zM68 8h1v3h-1zM69 8h1v3h-1zM70 8h1v2h-1zM71 7h1v3h-1zM72 8h1v2h-1zM73 8h1v2h-1zM74 8h1v2h-1zM75 7h1v3h-1zM76 7h1v3h-1zM77 7h1v3h-1zM78 7h1v4h-1zM79 7h1v3h-1zM80 7h1v3h-1zM81 8h1v3h-1z" fill="#ff0000" shape-rendering="crispEdges"/></svg></div>
<div class="cell" style="left:1377px;top:297px"></div>
<div class="ed" style="left:1389px;top:309px;width:29px;height:23px"></div>
<div class="t" style="left:1395px;top:313px;width:22px;overflow:hidden;">28</div>
<div class="spn" style="left:1418px;top:309px;width:18px;height:23px"><div class="su" style="top:1px;height:9px"><i class="au"></i></div><div class="su" style="top:11px;height:9px"><i class="ad"></i></div></div>
<div class="cb" style="left:1450px;top:314px"></div>
<div class="t" style="left:1465.7px;top:315px;width:12px;overflow:hidden">Sel</div>
<div class="tr" style="left:1389px;top:340px"><svg width="82" height="17" style="position:absolute;left:0;top:0"><path d="M0 8h1v2h-1zM1 7h1v4h-1zM2 7h1v4h-1zM3 7h1v4h-1zM4 8h1v2h-1zM5 8h1v2h-1zM6 8h1v3h-1zM7 8h1v3h-1zM8 7h1v4h-1zM9 8h1v2h-1zM10 8h1v2h-1zM11 8h1v2h-1zM12 7h1v4h-1zM13 8h1v3h-1zM14 8h1v2h-1zM15 8h1v3h-1zM16 7h1v3h-1zM17 7h1v3h-1zM18 7h1v3h-1zM19 6h1v4h-1zM20 5h1v3h-1zM21 4h1v4h-1zM22 4h1v2h-1zM23 2h1v4h-1zM24 2h1v4h-1zM25 3h1v2h-1zM26 3h1v3h-1zM27 3h1v3h-1zM28 3h1v2h-1zM29 4h1v2h-1zM30 4h1v4h-1zM31 5h1v3h-1zM32 6h1v4h-1zM33 7h1v3h-1zM34 8h1v3h-1zM35 9h1v3h-1zM36 10h1v3h-1zM37 11h1v3h-1zM38 12h1v3h-1zM39 13h1v2h-1zM40 13h1v3h-1zM41 13h1v2h-1zM42 13h1v2h-1zM43 13h1v3h-1zM44 8h1v8h-1zM45 8h1v2h-1zM46 7h1v3h-1zM47 7h1v3h-1zM48 7h1v3h-1zM49 7h1v3h-1zM50 7h1v3h-1zM51 7h1v3h-1zM52 8h1v3h-1zM53 7h1v4h-1zM54 8h1v3h-1zM55 8h1v2h-1zM56 8h1v2h-1zM57 7h1v3h-1zM58 8h1v2h-1zM59 8h1v3h-1zM60 8h1v2h-1zM61 8h1v3h-1zM62 8h1v3h-1zM63 8h1v3h-1zM64 8h1v3h-1zM65 8h1v3h-1zM66 8h1v2h-1zM67 8h1v3h-1zM68 8h1v2h-1zM69 8h1v2h-1zM70 7h1v3h-1zM71 8h1v2h-1zM72 8h1v2h-1zM73 8h1v3h-1zM74 8h1v3h-1zM75 8h1v2h-1zM76 7h1v4h-1zM77 8h1v2h-1zM78 8h1v2h-1zM79 8h1v3h-1zM80 8h1v2h-1zM81 7h1v4h-1z" fill="#ff00ff" shape-rendering="crispEdges"/></svg></div>
<div class="cell" style="left:735px;top:370px"></div>
<div class="ed" style="left:747px;top:382px;width:29px;height:23px"></div>
<div class="t" style="left:753px;top:386px;width:22px;overflow:hidden;">29</div>
<div class="spn" style="left:776px;top:382px;width:18px;height:23px"><div class="su" style="top:1px;height:9px"><i class="au"></i></div><div class="su" style="top:11px;height:9px"><i class="ad"></i></div></div>
<div class="cb" style="left:808px;top:387px"></div>
<div class="t" style="left:823.7px;top:388px;width:12px;overflow:hidden">Sel</div>
<div class="tr" style="left:747px;top:413px"><svg width="82" height="17" style="position:absolute;left:0;top:0"><path d="M0 8h1v3h-1zM1 7h1v3h-1zM2 7h1v4h-1zM3 7h1v3h-1zM4 7h1v4h-1zM5 8h1v2h-1zM6 7h1v3h-1zM7 8h1v3h-1zM8 7h1v3h-1zM9 8h1v3h-1zM10 7h1v3h-1zM11 8h1v2h-1zM12 8h1v2h-1zM13 8h1v3h-1zM14 8h1v3h-1zM15 8h1v2h-1zM16 7h1v4h-1zM17 8h1v3h-1zM18 7h1v3h-1zM19 6h1v4h-1zM20 5h1v3h-1zM21 5h1v2h-1zM22 4h1v3h-1zM23 2h1v3h-1zM24 2h1v4h-1zM25 2h1v4h-1zM26 3h1v2h-1zM27 3h1v2h-1zM28 3h1v3h-1zM29 4h1v2h-1zM30 4h1v4h-1zM31 5h1v4h-1zM32 6h1v4h-1zM33 7h1v4h-1zM34 8h1v3h-1zM35 9h1v3h-1zM36 10h1v3h-1zM37 11h1v3h-1zM38 12h1v3h-1zM39 12h1v3h-1zM40 13h1v2h-1zM41 12h1v4h-1zM42 13h1v3h-1zM43 12h1v3h-1zM44 7h1v8h-1zM45 8h1v3h-1zM46 7h1v3h-1zM47 8h1v3h-1zM48 7h1v4h-1zM49 8h1v2h-1zM50 8h1v2h-1zM51 7h1v3h-1zM52 7h1v4h-1zM53 8h1v2h-1zM54 8h1v2h-1zM55 8h1v2h-1zM56 7h1v3h-1zM57 8h1v2h-1zM58 8h1v2h-1zM59 8h1v2h-1zM60 8h1v2h-1zM61 7h1v3h-1zM62 8h1v2h-1zM63 8h1v3h-1zM64 8h1v3h-1zM65 7h1v4h-1zM66 7h1v4h-1zM67 8h1v2h-1zM68 8h1v2h-1zM69 8h1v3h-1zM70 8h1v2h-1zM71 8h1v2h-1zM72 8h1v3h-1zM73 8h1v2h-1zM74 8h1v2h-1zM75 8h1v3h-1zM76 8h1v2h-1zM77 7h1v3h-1zM78 8h1v2h-1zM79 7h1v3h-1zM80 7h1v4h-1zM81 7h1v4h-1z" fill="#ff00ff" shape-rendering="crispEdges"/></svg></div>
<div class="cell" style="left:842px;top:370px"></div>
<div class="ed" style="left:854px;top:382px;width:29px;height:23px"></div>
<div class="t" style="left:860px;top:386px;width:22px;overflow:hidden;">30</div>
<div class="spn" style="left:883px;top:382px;width:18px;height:23px"><div class="su" style="top:1px;height:9px"><i class="au"></i></div><div class="su" style="top:11px;height:9px"><i class="ad"></i></div></div>
<div class="cb" style="left:915px;top:387px"></div>
<div class="t" style="left:930.7px;top:388px;width:12px;overflow:hidden">Sel</div>
<div class="tr" style="left:854px;top:413px"><svg width="82" height="17" style="position:absolute;left:0;top:0"><path d="M0 7h1v4h-1zM1 7h1v3h-1zM2 8h1v3h-1zM3 8h1v2h-1zM4 8h1v2h-1zM5 8h1v2h-1zM6 8h1v2h-1zM7 7h1v3h-1zM8 8h1v3h-1zM9 8h1v2h-1zM10 8h1v2h-1zM11 8h1v3h-1zM12 7h1v3h-1zM13 7h1v3h-1zM14 8h1v3h-1zM15 8h1v3h-1zM16 8h1v2h-1zM17 7h1v3h-1zM18 7h1v3h-1zM19 7h1v3h-1zM20 7h1v2h-1zM21 5h1v3h-1zM22 5h1v3h-1zM23 4h1v3h-1zM24 5h1v3h-1zM25 4h1v4h-1zM26 5h1v2h-1zM27 4h1v3h-1zM28 5h1v3h-1zM29 5h1v3h-1zM30 6h1v3h-1zM31 6h1v3h-1zM32 6h1v5h-1zM33 7h1v3h-1zM34 8h1v3h-1zM35 9h1v3h-1zM36 9h1v3h-1zM37 9h1v4h-1zM38 10h1v3h-1zM39 10h1v4h-1zM40 10h1v4h-1zM41 10h1v3h-1zM42 11h1v2h-1zM43 11h1v2h-1zM44 8h1v5h-1zM45 8h1v2h-1zM46 7h1v4h-1zM47 8h1v2h-1zM48 7h1v3h-1zM49 7h1v3h-1zM50 7h1v4h-1zM51 7h1v3h-1zM52 8h1v2h-1zM53 7h1v4h-1zM54 7h1v3h-1zM55 7h1v3h-1zM56 7h1v4h-1zM57 8h1v2h-1zM58 8h1v2h-1zM59 7h1v3h-1zM60 8h1v2h-1zM61 8h1v3h-1zM62 8h1v3h-1zM63 8h1v3h-1zM64 8h1v3h-1zM65 7h1v4h-1zM66 8h1v3h-1zM67 7h1v3h-1zM68 8h1v3h-1zM69 8h1v3h-1zM70 8h1v2h-1zM71 7h1v3h-1zM72 8h1v3h-1zM73 8h1v2h-1zM74 8h1v3h-1zM75 7h1v3h-1zM76 8h1v3h-1zM77 8h1v3h-1zM78 8h1v2h-1zM79 8h1v2h-1zM80 8h1v2h-1zM81 8h1v3h-1z" fill="#00ffff" shape-rendering="crispEdges"/></svg></div>
<div class="cell" style="left:949px;top:370px"></div>
<div class="ed" style="left:961px;top:382px;width:29px;height:23px"></div>
<div class="t" style="left:967px;top:386px;width:22px;overflow:hidden;">31</div>
<div class="spn" style="left:990px;top:382px;width:18px;height:23px"><div class="su" style="top:1px;height:9px"><i class="au"></i></div><div class="su" style="top:11px;height:9px"><i class="ad"></i></div></div>
<div class="cb" style="left:1022px;top:387px"></div>
<div class="t" style="left:1037.7px;top:388px;width:12px;overflow:hidden">Sel</div>
<div class="tr" style="left:961px;top:413px"><svg width="82" height="17" style="position:absolute;left:0;top:0"><path d="M0 7h1v3h-1zM1 7h1v3h-1zM2 8h1v3h-1zM3 7h1v4h-1zM4 8h1v2h-1zM5 8h1v3h-1zM6 7h1v3h-1zM7 8h1v2h-1zM8 8h1v3h-1zM9 8h1v2h-1zM10 7h1v3h-1zM11 7h1v4h-1zM12 8h1v3h-1zM13 7h1v3h-1zM14 8h1v3h-1zM15 8h1v2h-1zM16 7h1v3h-1zM17 8h1v2h-1zM18 7h1v3h-1zM19 6h1v4h-1zM20 5h1v3h-1zM21 5h1v2h-1zM22 3h1v4h-1zM23 3h1v3h-1zM24 2h1v3h-1zM25 2h1v4h-1zM26 3h1v2h-1zM27 2h1v3h-1zM28 2h1v4h-1zM29 3h1v3h-1zM30 4h1v3h-1zM31 5h1v4h-1zM32 7h1v3h-1zM33 7h1v3h-1zM34 8h1v4h-1zM35 9h1v3h-1zM36 10h1v3h-1zM37 12h1v2h-1zM38 12h1v3h-1zM39 13h1v2h-1zM40 13h1v2h-1zM41 13h1v2h-1zM42 13h1v3h-1zM43 13h1v2h-1zM44 8h1v8h-1zM45 7h1v4h-1zM46 8h1v2h-1zM47 8h1v3h-1zM48 8h1v3h-1zM49 7h1v3h-1zM50 8h1v2h-1zM51 8h1v2h-1zM52 8h1v3h-1zM53 7h1v3h-1zM54 8h1v3h-1zM55 8h1v2h-1zM56 7h1v3h-1zM57 8h1v2h-1zM58 7h1v3h-1zM59 7h1v4h-1zM60 8h1v3h-1zM61 8h1v2h-1zM62 7h1v3h-1zM63 7h1v3h-1zM64 8h1v3h-1zM65 7h1v3h-1zM66 7h1v3h-1zM67 8h1v2h-1zM68 8h1v2h-1zM69 8h1v3h-1zM70 8h1v3h-1zM71 8h1v3h-1zM72 8h1v2h-1zM73 8h1v2h-1zM74 8h1v2h-1zM75 7h1v3h-1zM76 8h1v3h-1zM77 7h1v3h-1zM78 8h1v2h-1zM79 7h1v3h-1zM80 8h1v2h-1zM81 7h1v3h-1z" fill="#ff00ff" shape-rendering="crispEdges"/></svg></div>
<div class="cell" style="left:1056px;top:370px"></div>
<div class="ed" style="left:1068px;top:382px;width:29px;height:23px"></div>
<div class="t" style="left:1074px;top:386px;width:22px;overflow:hidden;">32</div>
<div class="spn" style="left:1097px;top:382px;width:18px;height:23px"><div class="su" style="top:1px;height:9px"><i class="au"></i></div><div class="su" style="top:11px;height:9px"><i class="ad"></i></div></div>
<div class="cb" style="left:1129px;top:387px"></div>
<div class="t" style="left:1144.7px;top:388px;width:12px;overflow:hidden">Sel</div>
<div class="tr" style="left:1068px;top:413px"><svg width="82" height="17" style="position:absolute;left:0;top:0"><path d="M0 8h1v3h-1zM1 8h1v2h-1zM2 8h1v2h-1zM3 7h1v3h-1zM4 8h1v3h-1zM5 7h1v3h-1zM6 8h1v2h-1zM7 8h1v3h-1zM8 8h1v3h-1zM9 7h1v3h-1zM10 8h1v3h-1zM11 7h1v3h-1zM12 8h1v3h-1zM13 8h1v2h-1zM14 8h1v2h-1zM15 8h1v2h-1zM16 7h1v3h-1zM17 8h1v3h-1zM18 7h1v4h-1zM19 7h1v3h-1zM20 8h1v2h-1zM21 7h1v3h-1zM22 8h1v2h-1zM23 8h1v3h-1zM24 8h1v3h-1zM25 7h1v3h-1zM26 7h1v3h-1zM27 8h1v2h-1zM28 8h1v3h-1zM29 8h1v3h-1zM30 8h1v3h-1zM31 8h1v2h-1zM32 8h1v2h-1zM33 8h1v3h-1zM34 7h1v4h-1zM35 8h1v3h-1zM36 7h1v4h-1zM37 8h1v3h-1zM38 7h1v4h-1zM39 8h1v3h-1zM40 7h1v3h-1zM41 7h1v3h-1zM42 8h1v2h-1zM43 7h1v3h-1zM44 8h1v2h-1zM45 8h1v2h-1zM46 7h1v4h-1zM47 8h1v3h-1zM48 7h1v4h-1zM49 7h1v3h-1zM50 8h1v2h-1zM51 7h1v4h-1zM52 8h1v3h-1zM53 8h1v3h-1zM54 8h1v2h-1zM55 7h1v4h-1zM56 8h1v2h-1zM57 7h1v3h-1zM58 8h1v2h-1zM59 7h1v3h-1zM60 8h1v3h-1zM61 8h1v3h-1zM62 7h1v3h-1zM63 7h1v3h-1zM64 8h1v2h-1zM65 7h1v3h-1zM66 7h1v4h-1zM67 8h1v3h-1zM68 8h1v2h-1zM69 8h1v3h-1zM70 8h1v2h-1zM71 8h1v3h-1zM72 8h1v2h-1zM73 8h1v3h-1zM74 8h1v3h-1zM75 8h1v2h-1zM76 7h1v4h-1zM77 8h1v2h-1zM78 8h1v3h-1zM79 8h1v2h-1zM80 8h1v2h-1zM81 7h1v3h-1z" fill="#0000ff" shape-rendering="crispEdges"/></svg></div>
<div class="cell" style="left:1163px;top:370px"></div>
<div class="ed" style="left:1175px;top:382px;width:29px;height:23px"></div>
<div class="t" style="left:1181px;top:386px;width:22px;overflow:hidden;">33</div>
<div class="spn" style="left:1204px;top:382px;width:18px;height:23px"><div class="su" style="top:1px;height:9px"><i class="au"></i></div><div class="su" style="top:11px;height:9px"><i class="ad"></i></div></div>
<div class="cb" style="left:1236px;top:387px"></div>
<div class="t" style="left:1251.7px;top:388px;width:12px;overflow:hidden">Sel</div>
<div class="tr" style="left:1175px;top:413px"><svg width="82" height="17" style="position:absolute;left:0;top:0"><path d="M0 8h1v2h-1zM1 8h1v3h-1zM2 8h1v3h-1zM3 7h1v4h-1zM4 8h1v3h-1zM5 8h1v2h-1zM6 8h1v3h-1zM7 8h1v2h-1zM8 8h1v2h-1zM9 8h1v2h-1zM10 7h1v3h-1zM11 8h1v2h-1zM12 8h1v3h-1zM13 8h1v2h-1zM14 7h1v3h-1zM15 8h1v3h-1zM16 7h1v3h-1zM17 8h1v2h-1zM18 7h1v3h-1zM19 5h1v4h-1zM20 4h1v4h-1zM21 3h1v3h-1zM22 2h1v3h-1zM23 1h1v3h-1zM24 0h1v4h-1zM25 0h1v3h-1zM26 0h1v4h-1zM27 1h1v2h-1zM28 0h1v4h-1zM29 2h1v3h-1zM30 3h1v4h-1zM31 4h1v4h-1zM32 5h1v4h-1zM33 7h1v3h-1zM34 8h1v4h-1zM35 10h1v3h-1zM36 11h1v4h-1zM37 12h1v3h-1zM38 14h1v3h-1zM39 15h1v2h-1zM40 15h1v2h-1zM41 14h1v3h-1zM42 15h1v2h-1zM43 15h1v2h-1zM44 8h1v9h-1zM45 7h1v4h-1zM46 8h1v3h-1zM47 8h1v2h-1zM48 8h1v2h-1zM49 8h1v3h-1zM50 8h1v3h-1zM51 8h1v2h-1zM52 7h1v3h-1zM53 7h1v4h-1zM54 8h1v2h-1zM55 7h1v4h-1zM56 8h1v2h-1zM57 8h1v2h-1zM58 7h1v3h-1zM59 8h1v2h-1zM60 8h1v2h-1zM61 8h1v3h-1zM62 8h1v2h-1zM63 7h1v4h-1zM64 8h1v2h-1zM65 8h1v3h-1zM66 7h1v3h-1zM67 8h1v2h-1zM68 8h1v3h-1zM69 7h1v4h-1zM70 7h1v4h-1zM71 7h1v3h-1zM72 8h1v3h-1zM73 8h1v3h-1zM74 8h1v2h-1zM75 7h1v3h-1zM76 8h1v2h-1zM77 8h1v2h-1zM78 7h1v3h-1zM79 7h1v4h-1zM80 7h1v3h-1zM81 8h1v3h-1z" fill="#ff0000" shape-rendering="crispEdges"/></svg></div>
<div class="cell" style="left:1270px;top:370px"></div>
<div class="ed" style="left:1282px;top:382px;width:29px;height:23px"></div>
<div class="t" style="left:1288px;top:386px;width:22px;overflow:hidden;">34</div>
<div class="spn" style="left:1311px;top:382px;width:18px;height:23px"><div class="su" style="top:1px;height:9px"><i class="au"></i></div><div class="su" style="top:11px;height:9px"><i class="ad"></i></div></div>
<div class="cb" style="left:1343px;top:387px"></div>
<div class="t" style="left:1358.7px;top:388px;width:12px;overflow:hidden">Sel</div>
<div class="tr" style="left:1282px;top:413px"><svg width="82" height="17" style="position:absolute;left:0;top:0"><path d="M0 8h1v2h-1zM1 7h1v3h-1zM2 8h1v3h-1zM3 8h1v3h-1zM4 7h1v3h-1zM5 7h1v3h-1zM6 8h1v2h-1zM7 8h1v2h-1zM8 7h1v3h-1zM9 8h1v2h-1zM10 8h1v3h-1zM11 7h1v3h-1zM12 8h1v3h-1zM13 8h1v3h-1zM14 8h1v2h-1zM15 7h1v3h-1zM16 8h1v2h-1zM17 8h1v2h-1zM18 7h1v4h-1zM19 8h1v2h-1zM20 8h1v2h-1zM21 8h1v2h-1zM22 8h1v3h-1zM23 8h1v2h-1zM24 8h1v2h-1zM25 7h1v3h-1zM26 8h1v2h-1zM27 8h1v2h-1zM28 8h1v2h-1zM29 8h1v3h-1zM30 7h1v3h-1zM31 7h1v4h-1zM32 8h1v3h-1zM33 8h1v3h-1zM34 8h1v3h-1zM35 8h1v3h-1zM36 7h1v3h-1zM37 8h1v3h-1zM38 7h1v3h-1zM39 7h1v3h-1zM40 7h1v3h-1zM41 8h1v3h-1zM42 7h1v3h-1zM43 7h1v3h-1zM44 8h1v3h-1zM45 8h1v2h-1zM46 8h1v2h-1zM47 7h1v4h-1zM48 8h1v2h-1zM49 8h1v2h-1zM50 8h1v2h-1zM51 8h1v3h-1zM52 8h1v3h-1zM53 8h1v3h-1zM54 8h1v3h-1zM55 7h1v3h-1zM56 7h1v3h-1zM57 8h1v2h-1zM58 8h1v3h-1zM59 8h1v2h-1zM60 8h1v2h-1zM61 8h1v2h-1zM62 8h1v2h-1zM63 7h1v3h-1zM64 8h1v3h-1zM65 7h1v3h-1zM66 8h1v2h-1zM67 8h1v2h-1zM68 7h1v3h-1zM69 8h1v3h-1zM70 7h1v3h-1zM71 7h1v3h-1zM72 7h1v3h-1zM73 8h1v2h-1zM74 7h1v3h-1zM75 7h1v4h-1zM76 8h1v3h-1zM77 8h1v3h-1zM78 8h1v2h-1zM79 7h1v3h-1zM80 8h1v2h-1zM81 7h1v4h-1z" fill="#0000ff" shape-rendering="crispEdges"/></svg></div>
<div class="cell" style="left:1377px;top:370px"></div>
<div class="ed" style="left:1389px;top:382px;width:29px;height:23px"></div>
<div class="t" style="left:1395px;top:386px;width:22px;overflow:hidden;">35</div>
<div class="spn" style="left:1418px;top:382px;width:18px;height:23px"><div class="su" style="top:1px;height:9px"><i class="au"></i></div><div class="su" style="top:11px;height:9px"><i class="ad"></i></div></div>
<div class="cb" style="left:1450px;top:387px"></div>
<div class="t" style="left:1465.7px;top:388px;width:12px;overflow:hidden">Sel</div>
<div class="tr" style="left:1389px;top:413px"><svg width="82" height="17" style="position:absolute;left:0;top:0"><path d="M0 8h1v3h-1zM1 7h1v4h-1zM2 8h1v2h-1zM3 7h1v3h-1zM4 7h1v3h-1zM5 7h1v4h-1zM6 7h1v4h-1zM7 8h1v2h-1zM8 8h1v3h-1zM9 8h1v3h-1zM10 7h1v3h-1zM11 7h1v3h-1zM12 7h1v3h-1zM13 8h1v3h-1zM14 7h1v3h-1zM15 8h1v2h-1zM16 8h1v2h-1zM17 8h1v3h-1zM18 7h1v3h-1zM19 6h1v4h-1zM20 6h1v3h-1zM21 6h1v2h-1zM22 5h1v3h-1zM23 5h1v3h-1zM24 5h1v3h-1zM25 4h1v4h-1zM26 5h1v3h-1zM27 5h1v2h-1zM28 5h1v3h-1zM29 5h1v3h-1zM30 5h1v3h-1zM31 6h1v3h-1zM32 7h1v3h-1zM33 8h1v2h-1zM34 8h1v3h-1zM35 9h1v2h-1zM36 9h1v4h-1zM37 9h1v4h-1zM38 10h1v3h-1zM39 10h1v3h-1zM40 10h1v4h-1zM41 10h1v4h-1zM42 11h1v3h-1zM43 11h1v2h-1zM44 8h1v5h-1zM45 8h1v2h-1zM46 7h1v3h-1zM47 8h1v3h-1zM48 8h1v2h-1zM49 7h1v4h-1zM50 8h1v2h-1zM51 7h1v4h-1zM52 7h1v3h-1zM53 8h1v2h-1zM54 8h1v3h-1zM55 8h1v2h-1zM56 7h1v4h-1zM57 8h1v2h-1zM58 8h1v3h-1zM59 7h1v3h-1zM60 8h1v3h-1zM61 7h1v3h-1zM62 7h1v4h-1zM63 8h1v2h-1zM64 8h1v2h-1zM65 7h1v4h-1zM66 8h1v2h-1zM67 8h1v3h-1zM68 7h1v3h-1zM69 8h1v2h-1zM70 7h1v3h-1zM71 8h1v3h-1zM72 7h1v3h-1zM73 8h1v3h-1zM74 8h1v2h-1zM75 8h1v3h-1zM76 8h1v3h-1zM77 7h1v3h-1zM78 7h1v3h-1zM79 8h1v3h-1zM80 8h1v3h-1zM81 8h1v2h-1z" fill="#00ffff" shape-rendering="crispEdges"/></svg></div>
<div class="cell" style="left:735px;top:443px"></div>
<div class="ed" style="left:747px;top:455px;width:29px;height:23px"></div>
<div class="t" style="left:753px;top:459px;width:22px;overflow:hidden;">36</div>
<div class="spn" style="left:776px;top:455px;width:18px;height:23px"><div class="su" style="top:1px;height:9px"><i class="au"></i></div><div class="su" style="top:11px;height:9px"><i class="ad"></i></div></div>
<div class="cb" style="left:808px;top:460px"></div>
<div class="t" style="left:823.7px;top:461px;width:12px;overflow:hidden">Sel</div>
<div class="tr" style="left:747px;top:486px"><svg width="82" height="17" style="position:absolute;left:0;top:0"><path d="M0 7h1v3h-1zM1 8h1v2h-1zM2 8h1v2h-1zM3 8h1v3h-1zM4 8h1v3h-1zM5 7h1v3h-1zM6 8h1v2h-1zM7 8h1v2h-1zM8 8h1v3h-1zM9 8h1v2h-1zM10 8h1v2h-1zM11 8h1v3h-1zM12 8h1v3h-1zM13 7h1v3h-1zM14 8h1v3h-1zM15 8h1v2h-1zM16 8h1v2h-1zM17 8h1v3h-1zM18 7h1v4h-1zM19 7h1v4h-1zM20 8h1v2h-1zM21 8h1v2h-1zM22 8h1v2h-1zM23 8h1v2h-1zM24 8h1v2h-1zM25 8h1v3h-1zM26 8h1v2h-1zM27 8h1v2h-1zM28 7h1v4h-1zM29 7h1v3h-1zM30 7h1v3h-1zM31 8h1v3h-1zM32 7h1v3h-1zM33 7h1v4h-1zM34 8h1v2h-1zM35 7h1v4h-1zM36 7h1v3h-1zM37 8h1v2h-1zM38 8h1v2h-1zM39 7h1v3h-1zM40 8h1v3h-1zM41 7h1v3h-1zM42 8h1v3h-1zM43 7h1v3h-1zM44 7h1v3h-1zM45 7h1v4h-1zM46 7h1v3h-1zM47 7h1v3h-1zM48 8h1v2h-1zM49 8h1v2h-1zM50 8h1v2h-1zM51 8h1v2h-1zM52 7h1v4h-1zM53 8h1v3h-1zM54 8h1v3h-1zM55 8h1v3h-1zM56 7h1v3h-1zM57 8h1v3h-1zM58 8h1v3h-1zM59 7h1v3h-1zM60 8h1v2h-1zM61 8h1v3h-1zM62 7h1v4h-1zM63 8h1v2h-1zM64 8h1v2h-1zM65 8h1v2h-1zM66 7h1v4h-1zM67 8h1v3h-1zM68 7h1v3h-1zM69 7h1v3h-1zM70 7h1v3h-1zM71 7h1v3h-1zM72 7h1v3h-1zM73 8h1v2h-1zM74 8h1v2h-1zM75 7h1v3h-1zM76 8h1v2h-1zM77 8h1v2h-1zM78 8h1v2h-1zM79 8h1v2h-1zM80 8h1v2h-1zM81 8h1v2h-1z" fill="#0000ff" shape-rendering="crispEdges"/></svg></div>
<div class="cell" style="left:842px;top:443px"></div>
<div class="ed" style="left:854px;top:455px;width:29px;height:23px"></div>
<div class="t" style="left:860px;top:459px;width:22px;overflow:hidden;">37</div>
<div class="spn" style="left:883px;top:455px;width:18px;height:23px"><div class="su" style="top:1px;height:9px"><i class="au"></i></div><div class="su" style="top:11px;height:9px"><i class="ad"></i></div></div>
<div class="cb" style="left:915px;top:460px"></div>
<div class="t" style="left:930.7px;top:461px;width:12px;overflow:hidden">Sel</div>
<div class="tr" style="left:854px;top:486px"><svg width="82" height="17" style="position:absolute;left:0;top:0"><path d="M0 8h1v2h-1zM1 8h1v2h-1zM2 7h1v3h-1zM3 8h1v2h-1zM4 7h1v3h-1zM5 7h1v3h-1zM6 7h1v3h-1zM7 7h1v3h-1zM8 7h1v4h-1zM9 8h1v3h-1zM10 8h1v3h-1zM11 7h1v3h-1zM12 7h1v3h-1zM13 7h1v4h-1zM14 7h1v4h-1zM15 8h1v2h-1zM16 8h1v3h-1zM17 8h1v3h-1zM18 7h1v3h-1zM19 7h1v4h-1zM20 8h1v2h-1zM21 7h1v3h-1zM22 7h1v3h-1zM23 7h1v3h-1zM24 7h1v3h-1zM25 8h1v3h-1zM26 7h1v4h-1zM27 7h1v4h-1zM28 7h1v3h-1zM29 7h1v3h-1zM30 7h1v4h-1zM31 8h1v2h-1zM32 8h1v2h-1zM33 8h1v3h-1zM34 8h1v2h-1zM35 8h1v2h-1zM36 7h1v4h-1zM37 7h1v3h-1zM38 8h1v3h-1zM39 8h1v2h-1zM40 7h1v3h-1zM41 8h1v3h-1zM42 8h1v3h-1zM43 8h1v3h-1zM44 8h1v3h-1zM45 8h1v2h-1zM46 7h1v3h-1zM47 7h1v3h-1zM48 8h1v2h-1zM49 8h1v3h-1zM50 8h1v3h-1zM51 8h1v2h-1zM52 7h1v3h-1zM53 7h1v3h-1zM54 8h1v2h-1zM55 7h1v4h-1zM56 7h1v3h-1zM57 7h1v4h-1zM58 8h1v3h-1zM59 8h1v3h-1zM60 8h1v3h-1zM61 8h1v3h-1zM62 8h1v3h-1zM63 8h1v3h-1zM64 8h1v2h-1zM65 7h1v4h-1zM66 7h1v4h-1zM67 7h1v3h-1zM68 7h1v3h-1zM69 8h1v2h-1zM70 8h1v2h-1zM71 7h1v4h-1zM72 7h1v4h-1zM73 8h1v2h-1zM74 7h1v3h-1zM75 8h1v2h-1zM76 8h1v2h-1zM77 7h1v3h-1zM78 8h1v3h-1zM79 8h1v3h-1zM80 7h1v3h-1zM81 8h1v3h-1z" fill="#0000ff" shape-rendering="crispEdges"/></svg></div>
<div class="cell" style="left:949px;top:443px"></div>
<div class="ed" style="left:961px;top:455px;width:29px;height:23px"></div>
<div class="t" style="left:967px;top:459px;width:22px;overflow:hidden;">38</div>
<div class="spn" style="left:990px;top:455px;width:18px;height:23px"><div class="su" style="top:1px;height:9px"><i class="au"></i></div><div class="su" style="top:11px;height:9px"><i class="ad"></i></div></div>
<div class="cb" style="left:1022px;top:460px"></div>
<div class="t" style="left:1037.7px;top:461px;width:12px;overflow:hidden">Sel</div>
<div class="tr" style="left:961px;top:486px"><svg width="82" height="17" style="position:absolute;left:0;top:0"><path d="M0 7h1v3h-1zM1 7h1v3h-1zM2 8h1v2h-1zM3 8h1v3h-1zM4 7h1v3h-1zM5 8h1v3h-1zM6 8h1v3h-1zM7 8h1v2h-1zM8 7h1v4h-1zM9 8h1v3h-1zM10 8h1v2h-1zM11 7h1v4h-1zM12 8h1v3h-1zM13 7h1v4h-1zM14 7h1v4h-1zM15 7h1v4h-1zM16 7h1v3h-1zM17 7h1v4h-1zM18 7h1v3h-1zM19 6h1v3h-1zM20 5h1v3h-1zM21 4h1v4h-1zM22 3h1v4h-1zM23 2h1v3h-1zM24 3h1v3h-1zM25 3h1v3h-1zM26 2h1v3h-1zM27 2h1v3h-1zM28 3h1v3h-1zM29 3h1v4h-1zM30 4h1v3h-1zM31 6h1v2h-1zM32 6h1v3h-1zM33 7h1v4h-1zM34 8h1v3h-1zM35 9h1v3h-1zM36 10h1v3h-1zM37 11h1v4h-1zM38 12h1v3h-1zM39 12h1v4h-1zM40 13h1v2h-1zM41 12h1v4h-1zM42 12h1v4h-1zM43 12h1v4h-1zM44 8h1v7h-1zM45 8h1v2h-1zM46 8h1v3h-1zM47 8h1v2h-1zM48 8h1v3h-1zM49 8h1v2h-1zM50 7h1v4h-1zM51 7h1v4h-1zM52 8h1v3h-1zM53 7h1v4h-1zM54 7h1v3h-1zM55 8h1v2h-1zM56 8h1v2h-1zM57 8h1v3h-1zM58 7h1v3h-1zM59 7h1v3h-1zM60 8h1v2h-1zM61 8h1v2h-1zM62 8h1v2h-1zM63 7h1v3h-1zM64 8h1v3h-1zM65 8h1v3h-1zM66 7h1v4h-1zM67 7h1v3h-1zM68 8h1v3h-1zM69 7h1v3h-1zM70 8h1v2h-1zM71 7h1v3h-1zM72 7h1v4h-1zM73 8h1v2h-1zM74 7h1v3h-1zM75 8h1v2h-1zM76 7h1v3h-1zM77 7h1v4h-1zM78 8h1v2h-1zM79 8h1v3h-1zM80 7h1v4h-1zM81 8h1v3h-1z" fill="#ff00ff" shape-rendering="crispEdges"/></svg></div>
<div class="cell" style="left:1056px;top:443px"></div>
<div class="ed" style="left:1068px;top:455px;width:29px;height:23px"></div>
<div class="t" style="left:1074px;top:459px;width:22px;overflow:hidden;">0</div>
<div class="spn" style="left:1097px;top:455px;width:18px;height:23px"><div class="su" style="top:1px;height:9px"><i class="au"></i></div><div class="su" style="top:11px;height:9px"><i class="ad"></i></div></div>
<div class="cb dis" style="left:1129px;top:460px"></div>
<div class="t" style="left:1144.7px;top:461px;width:12px;overflow:hidden;color:#a0a0a0">Sel</div>
<div class="tr empty" style="left:1068px;top:486px"></div>
<div class="cell" style="left:1163px;top:443px"></div>
<div class="ed" style="left:1175px;top:455px;width:29px;height:23px"></div>
<div class="t" style="left:1181px;top:459px;width:22px;overflow:hidden;">0</div>
<div class="spn" style="left:1204px;top:455px;width:18px;height:23px"><div class="su" style="top:1px;height:9px"><i class="au"></i></div><div class="su" style="top:11px;height:9px"><i class="ad"></i></div></div>
<div class="cb dis" style="left:1236px;top:460px"></div>
<div class="t" style="left:1251.7px;top:461px;width:12px;overflow:hidden;color:#a0a0a0">Sel</div>
<div class="tr empty" style="left:1175px;top:486px"></div>
<div class="cell" style="left:1270px;top:443px"></div>
<div class="ed" style="left:1282px;top:455px;width:29px;height:23px"></div>
<div class="t" style="left:1288px;top:459px;width:22px;overflow:hidden;">0</div>
<div class="spn" style="left:1311px;top:455px;width:18px;height:23px"><div class="su" style="top:1px;height:9px"><i class="au"></i></div><div class="su" style="top:11px;height:9px"><i class="ad"></i></div></div>
<div class="cb dis" style="left:1343px;top:460px"></div>
<div class="t" style="left:1358.7px;top:461px;width:12px;overflow:hidden;color:#a0a0a0">Sel</div>
<div class="tr empty" style="left:1282px;top:486px"></div>
<div class="cell" style="left:1377px;top:443px"></div>
<div class="ed" style="left:1389px;top:455px;width:29px;height:23px"></div>
<div class="t" style="left:1395px;top:459px;width:22px;overflow:hidden;">0</div>
<div class="spn" style="left:1418px;top:455px;width:18px;height:23px"><div class="su" style="top:1px;height:9px"><i class="au"></i></div><div class="su" style="top:11px;height:9px"><i class="ad"></i></div></div>
<div class="cb dis" style="left:1450px;top:460px"></div>
<div class="t" style="left:1465.7px;top:461px;width:12px;overflow:hidden;color:#a0a0a0">Sel</div>
<div class="tr empty" style="left:1389px;top:486px"></div></body></html>
